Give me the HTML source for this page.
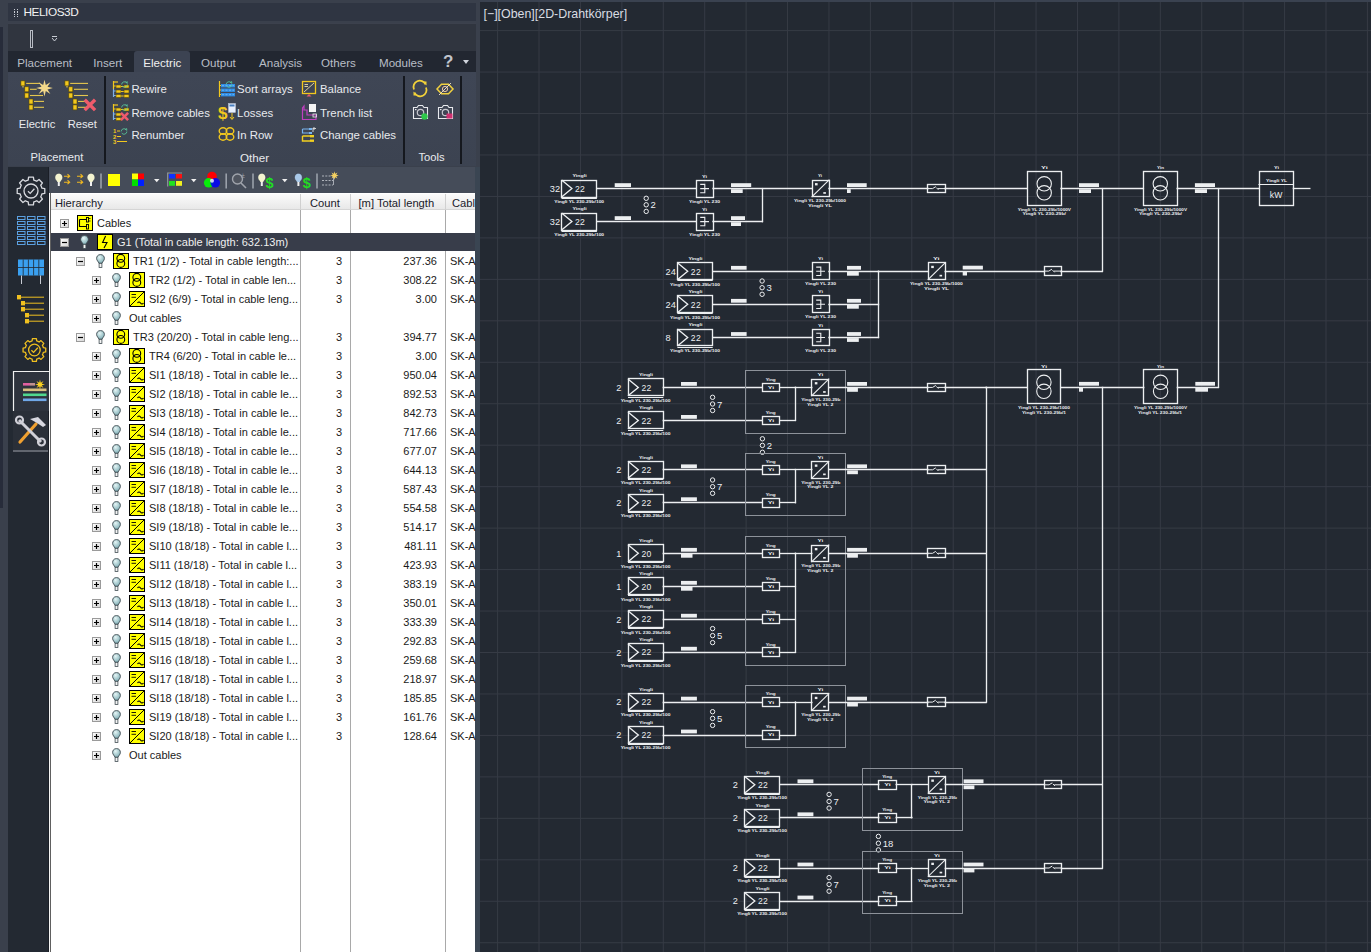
<!DOCTYPE html><html><head><meta charset="utf-8"><style>
*{margin:0;padding:0;box-sizing:border-box}
html,body{width:1371px;height:952px;overflow:hidden;background:#3a404c;font-family:"Liberation Sans",sans-serif}
.a{position:absolute}
.t{position:absolute;white-space:nowrap;line-height:1}
</style></head><body>
<div class="a" style="left:0;top:0;width:480px;height:952px;background:#3a404c"></div><div class="a" style="left:0;top:27px;width:3px;height:481px;background:#272c3a"></div><div class="a" style="left:8px;top:3px;width:468px;height:18px;background:#2f3542"></div><div class="a" style="left:14.0px;top:9.0px;width:1.3px;height:1.3px;background:#c8ccd4"></div><div class="a" style="left:16.6px;top:9.0px;width:1.3px;height:1.3px;background:#c8ccd4"></div><div class="a" style="left:14.0px;top:11.3px;width:1.3px;height:1.3px;background:#c8ccd4"></div><div class="a" style="left:16.6px;top:11.3px;width:1.3px;height:1.3px;background:#c8ccd4"></div><div class="a" style="left:14.0px;top:13.6px;width:1.3px;height:1.3px;background:#c8ccd4"></div><div class="a" style="left:16.6px;top:13.6px;width:1.3px;height:1.3px;background:#c8ccd4"></div><div class="a" style="left:14.0px;top:15.9px;width:1.3px;height:1.3px;background:#c8ccd4"></div><div class="a" style="left:16.6px;top:15.9px;width:1.3px;height:1.3px;background:#c8ccd4"></div><div class="t" style="left:23.5px;top:6.6px;font-size:11.8px;letter-spacing:-0.45px;color:#f2f2f2">HELIOS3D</div><div class="a" style="left:8px;top:23px;width:468px;height:28px;background:#30353f;border-top:1px solid #3c414d"></div><div class="a" style="left:30px;top:30px;width:3px;height:18px;border:1px solid #b8bcc4"></div><div class="a" style="left:52px;top:36px;width:5px;height:1px;background:#c8ccd4"></div><svg class="a" style="left:51px;top:37px" width="7" height="5"><path d="M1 1 L3.5 4 L6 1" stroke="#c8ccd4" fill="none" stroke-width="1"/></svg><div class="a" style="left:8px;top:51px;width:468px;height:21px;background:#222731"></div><div class="a" style="left:134px;top:51px;width:56px;height:22px;background:#3c4352;border-radius:3px 3px 0 0"></div><div class="t" style="left:17.3px;top:56.9px;font-size:11.6px;color:#b9bec6">Placement</div><div class="t" style="left:93.3px;top:56.9px;font-size:11.6px;color:#b9bec6">Insert</div><div class="t" style="left:143.3px;top:56.9px;font-size:11.6px;color:#f0f0f0">Electric</div><div class="t" style="left:201px;top:56.9px;font-size:11.6px;color:#b9bec6">Output</div><div class="t" style="left:259px;top:56.9px;font-size:11.6px;color:#b9bec6">Analysis</div><div class="t" style="left:321px;top:56.9px;font-size:11.6px;color:#b9bec6">Others</div><div class="t" style="left:379px;top:56.9px;font-size:11.6px;color:#b9bec6">Modules</div><div class="t" style="left:443px;top:53px;font-size:17px;font-weight:bold;color:#c0c4cc">?</div><svg class="a" style="left:463px;top:60px" width="7" height="5"><path d="M0 0 H6 L3 4Z" fill="#d0d4dc"/></svg><div class="a" style="left:8px;top:72px;width:468px;height:94px;background:linear-gradient(#3f4655,#3c4351)"></div><div class="a" style="left:104px;top:76px;width:1.5px;height:88px;background:#15181e"></div><div class="a" style="left:403px;top:76px;width:1.5px;height:88px;background:#15181e"></div><div class="a" style="left:460px;top:76px;width:1.5px;height:88px;background:#15181e"></div><div class="t" style="left:18.7px;top:119.3px;font-size:11.2px;color:#e8eaee;">Electric</div><div class="t" style="left:67.7px;top:119.3px;font-size:11.2px;color:#e8eaee;">Reset</div><div class="t" style="left:30.5px;top:151.6px;font-size:11.2px;color:#e8eaee;">Placement</div><div class="t" style="left:240px;top:151.6px;font-size:11.6px;color:#e8eaee;">Other</div><div class="t" style="left:418.5px;top:151.6px;font-size:11.2px;color:#e8eaee;">Tools</div><div class="t" style="left:131.4px;top:84px;font-size:11.4px;color:#e8eaee;">Rewire</div><div class="t" style="left:131.4px;top:107.7px;font-size:11.4px;color:#e8eaee;">Remove cables</div><div class="t" style="left:131.4px;top:130.3px;font-size:11.4px;color:#e8eaee;">Renumber</div><div class="t" style="left:237.1px;top:84px;font-size:11.4px;color:#e8eaee;">Sort arrays</div><div class="t" style="left:237.1px;top:107.7px;font-size:11.4px;color:#e8eaee;">Losses</div><div class="t" style="left:237.1px;top:130.3px;font-size:11.4px;color:#e8eaee;">In Row</div><div class="t" style="left:320px;top:84px;font-size:11.4px;color:#e8eaee;">Balance</div><div class="t" style="left:320px;top:107.7px;font-size:11.4px;color:#e8eaee;">Trench list</div><div class="t" style="left:320px;top:130.3px;font-size:11.4px;color:#e8eaee;">Change cables</div><div class="a" style="left:8px;top:167px;width:41px;height:785px;background:#232932"></div><div class="a" style="left:48px;top:167px;width:1px;height:785px;background:#1a1e26"></div><div class="a" style="left:49px;top:193px;width:1px;height:759px;background:#f4f4f4"></div><div class="a" style="left:50px;top:193px;width:1px;height:759px;background:#606060"></div><div class="a" style="left:49px;top:167px;width:427px;height:26px;background:#454c59"></div><div class="a" style="left:51px;top:193px;width:424px;height:759px;background:#ffffff"></div><div class="a" style="left:475px;top:167px;width:5px;height:785px;background:#3a4552"></div><div class="a" style="left:51px;top:194px;width:424px;height:16px;background:linear-gradient(#fbfbfb,#e8e8e8);border-bottom:1px solid #d5d5d5"></div><div class="a" style="left:300px;top:194px;width:1px;height:16px;background:#d0d0d0"></div><div class="a" style="left:350px;top:194px;width:1px;height:16px;background:#d0d0d0"></div><div class="a" style="left:445px;top:194px;width:1px;height:16px;background:#d0d0d0"></div><div class="t" style="left:55px;top:197.5px;font-size:11.2px;color:#1a1a2a;">Hierarchy</div><div class="t" style="left:310px;top:197.5px;font-size:11.2px;color:#1a1a2a;">Count</div><div class="t" style="left:358.5px;top:197.5px;font-size:11.2px;color:#1a1a2a;">[m] Total length</div><div class="t" style="left:452px;top:197.5px;font-size:11.2px;color:#1a1a2a;">Cabl</div><svg width="0" height="0" style="position:absolute"><defs>

<linearGradient id="gexp" x1="0" y1="0" x2="1" y2="1"><stop offset="0" stop-color="#ffffff"/><stop offset="1" stop-color="#d4d4d4"/></linearGradient>
<radialGradient id="gbulb" cx="0.38" cy="0.3" r="0.75"><stop offset="0" stop-color="#e6f6f6"/><stop offset="1" stop-color="#78aab2"/></radialGradient>





</defs></svg><div class="a" style="left:51px;top:233px;width:424px;height:18px;background:#383d4a"></div><div class="a" style="left:300px;top:210px;width:1px;height:742px;background:#a9a9a9"></div><div class="a" style="left:350px;top:210px;width:1px;height:742px;background:#a9a9a9"></div><div class="a" style="left:445px;top:210px;width:1px;height:742px;background:#a9a9a9"></div><div class="a" style="left:51px;top:233px;width:424px;height:18px;background:#383d4a"></div><svg class="a" style="left:60px;top:219px" width="9" height="9"><rect x="0.5" y="0.5" width="8" height="8" fill="url(#gexp)" stroke="#9a9a9a"/><path d="M2 4.5 H7 M4.5 2 V7" stroke="#000" stroke-width="1.2"/></svg><svg class="a" style="left:77px;top:215px" width="16" height="16"><rect x="0.5" y="0.5" width="15" height="15" fill="#ffff00" stroke="#000"/><path d="M2.5 4.5 H10 M2.5 4.5 V11.5 H10" fill="none" stroke="#000" stroke-width="1.1"/><rect x="9.5" y="2.5" width="2" height="4.5" fill="none" stroke="#000" stroke-width="0.9"/><rect x="9.5" y="9.5" width="2" height="4.5" fill="none" stroke="#000" stroke-width="0.9"/><line x1="11.5" y1="3.5" x2="13.5" y2="3.5" stroke="#000" stroke-width="0.8"/><line x1="11.5" y1="6" x2="13.5" y2="6" stroke="#000" stroke-width="0.8"/></svg><div class="t" style="left:97px;top:217.9px;font-size:11px;color:#1a1a1a">Cables</div><svg class="a" style="left:60px;top:238px" width="9" height="9"><rect x="0.5" y="0.5" width="8" height="8" fill="url(#gexp)" stroke="#9a9a9a"/><path d="M2 4.5 H7" stroke="#000" stroke-width="1.2"/></svg><svg class="a" style="left:80px;top:234.5px" width="9" height="14"><path d="M4.5 0.6 C7.3 0.6 8.4 2.6 8.4 4.5 C8.4 6.5 6.6 7.4 6 9.3 L3 9.3 C2.4 7.4 0.6 6.5 0.6 4.5 C0.6 2.6 1.7 0.6 4.5 0.6Z" fill="url(#gbulb)" stroke="#3e4a50" stroke-width="0.9"/><rect x="3.1" y="9.3" width="2.8" height="4.1" fill="#f4f4f4" stroke="#3e4a50" stroke-width="0.8"/></svg><svg class="a" style="left:97px;top:234px" width="16" height="16"><rect x="0.5" y="0.5" width="15" height="15" fill="#ffff00" stroke="#000"/><path d="M8.6 2 L5.6 8.5 L10 8.5 L7 14" fill="none" stroke="#000" stroke-width="1.1"/></svg><div class="t" style="left:117px;top:236.9px;font-size:11px;color:#f0f0f0">G1 (Total in cable length: 632.13m)</div><svg class="a" style="left:76px;top:257px" width="9" height="9"><rect x="0.5" y="0.5" width="8" height="8" fill="url(#gexp)" stroke="#9a9a9a"/><path d="M2 4.5 H7" stroke="#000" stroke-width="1.2"/></svg><svg class="a" style="left:96px;top:253.5px" width="9" height="14"><path d="M4.5 0.6 C7.3 0.6 8.4 2.6 8.4 4.5 C8.4 6.5 6.6 7.4 6 9.3 L3 9.3 C2.4 7.4 0.6 6.5 0.6 4.5 C0.6 2.6 1.7 0.6 4.5 0.6Z" fill="url(#gbulb)" stroke="#3e4a50" stroke-width="0.9"/><rect x="3.1" y="9.3" width="2.8" height="4.1" fill="#f4f4f4" stroke="#3e4a50" stroke-width="0.8"/></svg><svg class="a" style="left:113px;top:253px" width="16" height="16"><rect x="0.5" y="0.5" width="15" height="15" fill="#ffff00" stroke="#000"/><circle cx="7.8" cy="5.3" r="3.9" fill="none" stroke="#000" stroke-width="1.1"/><circle cx="7.8" cy="10.4" r="3.9" fill="none" stroke="#000" stroke-width="1.1"/><line x1="7.8" y1="0.5" x2="7.8" y2="1.6" stroke="#000" stroke-width="1.4"/><line x1="7.8" y1="14.2" x2="7.8" y2="15.5" stroke="#000" stroke-width="1.4"/></svg><div class="t" style="left:133px;top:255.9px;font-size:11px;color:#1a1a1a">TR1 (1/2) - Total in cable length:...</div><div class="t" style="left:300px;width:42px;text-align:right;top:255.9px;font-size:11px;color:#1a1a1a">3</div><div class="t" style="left:350px;width:87px;text-align:right;top:255.9px;font-size:11px;color:#1a1a1a">237.36</div><div class="t" style="left:450px;top:255.9px;font-size:11px;color:#1a1a1a">SK-A</div><svg class="a" style="left:92px;top:276px" width="9" height="9"><rect x="0.5" y="0.5" width="8" height="8" fill="url(#gexp)" stroke="#9a9a9a"/><path d="M2 4.5 H7 M4.5 2 V7" stroke="#000" stroke-width="1.2"/></svg><svg class="a" style="left:112px;top:272.5px" width="9" height="14"><path d="M4.5 0.6 C7.3 0.6 8.4 2.6 8.4 4.5 C8.4 6.5 6.6 7.4 6 9.3 L3 9.3 C2.4 7.4 0.6 6.5 0.6 4.5 C0.6 2.6 1.7 0.6 4.5 0.6Z" fill="url(#gbulb)" stroke="#3e4a50" stroke-width="0.9"/><rect x="3.1" y="9.3" width="2.8" height="4.1" fill="#f4f4f4" stroke="#3e4a50" stroke-width="0.8"/></svg><svg class="a" style="left:129px;top:272px" width="16" height="16"><rect x="0.5" y="0.5" width="15" height="15" fill="#ffff00" stroke="#000"/><circle cx="7.8" cy="5.3" r="3.9" fill="none" stroke="#000" stroke-width="1.1"/><circle cx="7.8" cy="10.4" r="3.9" fill="none" stroke="#000" stroke-width="1.1"/><line x1="7.8" y1="0.5" x2="7.8" y2="1.6" stroke="#000" stroke-width="1.4"/><line x1="7.8" y1="14.2" x2="7.8" y2="15.5" stroke="#000" stroke-width="1.4"/></svg><div class="t" style="left:149px;top:274.9px;font-size:11px;color:#1a1a1a">TR2 (1/2) - Total in cable len...</div><div class="t" style="left:300px;width:42px;text-align:right;top:274.9px;font-size:11px;color:#1a1a1a">3</div><div class="t" style="left:350px;width:87px;text-align:right;top:274.9px;font-size:11px;color:#1a1a1a">308.22</div><div class="t" style="left:450px;top:274.9px;font-size:11px;color:#1a1a1a">SK-A</div><svg class="a" style="left:92px;top:295px" width="9" height="9"><rect x="0.5" y="0.5" width="8" height="8" fill="url(#gexp)" stroke="#9a9a9a"/><path d="M2 4.5 H7 M4.5 2 V7" stroke="#000" stroke-width="1.2"/></svg><svg class="a" style="left:112px;top:291.5px" width="9" height="14"><path d="M4.5 0.6 C7.3 0.6 8.4 2.6 8.4 4.5 C8.4 6.5 6.6 7.4 6 9.3 L3 9.3 C2.4 7.4 0.6 6.5 0.6 4.5 C0.6 2.6 1.7 0.6 4.5 0.6Z" fill="url(#gbulb)" stroke="#3e4a50" stroke-width="0.9"/><rect x="3.1" y="9.3" width="2.8" height="4.1" fill="#f4f4f4" stroke="#3e4a50" stroke-width="0.8"/></svg><svg class="a" style="left:129px;top:291px" width="16" height="16"><rect x="0.5" y="0.5" width="15" height="15" fill="#ffff00" stroke="#000"/><line x1="1" y1="15" x2="15" y2="1" stroke="#000" stroke-width="1"/><line x1="2.5" y1="3.5" x2="7" y2="3.5" stroke="#000" stroke-width="0.9"/><line x1="2.5" y1="6.3" x2="7" y2="6.3" stroke="#000" stroke-width="0.9"/><path d="M8.5 12 Q10 10 11.5 12 T14.5 12" fill="none" stroke="#000" stroke-width="1.2"/></svg><div class="t" style="left:149px;top:293.9px;font-size:11px;color:#1a1a1a">SI2 (6/9) - Total in cable leng...</div><div class="t" style="left:300px;width:42px;text-align:right;top:293.9px;font-size:11px;color:#1a1a1a">3</div><div class="t" style="left:350px;width:87px;text-align:right;top:293.9px;font-size:11px;color:#1a1a1a">3.00</div><div class="t" style="left:450px;top:293.9px;font-size:11px;color:#1a1a1a">SK-A</div><svg class="a" style="left:92px;top:314px" width="9" height="9"><rect x="0.5" y="0.5" width="8" height="8" fill="url(#gexp)" stroke="#9a9a9a"/><path d="M2 4.5 H7 M4.5 2 V7" stroke="#000" stroke-width="1.2"/></svg><svg class="a" style="left:112px;top:310.5px" width="9" height="14"><path d="M4.5 0.6 C7.3 0.6 8.4 2.6 8.4 4.5 C8.4 6.5 6.6 7.4 6 9.3 L3 9.3 C2.4 7.4 0.6 6.5 0.6 4.5 C0.6 2.6 1.7 0.6 4.5 0.6Z" fill="url(#gbulb)" stroke="#3e4a50" stroke-width="0.9"/><rect x="3.1" y="9.3" width="2.8" height="4.1" fill="#f4f4f4" stroke="#3e4a50" stroke-width="0.8"/></svg><div class="t" style="left:129px;top:312.9px;font-size:11px;color:#1a1a1a">Out cables</div><svg class="a" style="left:76px;top:333px" width="9" height="9"><rect x="0.5" y="0.5" width="8" height="8" fill="url(#gexp)" stroke="#9a9a9a"/><path d="M2 4.5 H7" stroke="#000" stroke-width="1.2"/></svg><svg class="a" style="left:96px;top:329.5px" width="9" height="14"><path d="M4.5 0.6 C7.3 0.6 8.4 2.6 8.4 4.5 C8.4 6.5 6.6 7.4 6 9.3 L3 9.3 C2.4 7.4 0.6 6.5 0.6 4.5 C0.6 2.6 1.7 0.6 4.5 0.6Z" fill="url(#gbulb)" stroke="#3e4a50" stroke-width="0.9"/><rect x="3.1" y="9.3" width="2.8" height="4.1" fill="#f4f4f4" stroke="#3e4a50" stroke-width="0.8"/></svg><svg class="a" style="left:113px;top:329px" width="16" height="16"><rect x="0.5" y="0.5" width="15" height="15" fill="#ffff00" stroke="#000"/><circle cx="7.8" cy="5.3" r="3.9" fill="none" stroke="#000" stroke-width="1.1"/><circle cx="7.8" cy="10.4" r="3.9" fill="none" stroke="#000" stroke-width="1.1"/><line x1="7.8" y1="0.5" x2="7.8" y2="1.6" stroke="#000" stroke-width="1.4"/><line x1="7.8" y1="14.2" x2="7.8" y2="15.5" stroke="#000" stroke-width="1.4"/></svg><div class="t" style="left:133px;top:331.9px;font-size:11px;color:#1a1a1a">TR3 (20/20) - Total in cable leng...</div><div class="t" style="left:300px;width:42px;text-align:right;top:331.9px;font-size:11px;color:#1a1a1a">3</div><div class="t" style="left:350px;width:87px;text-align:right;top:331.9px;font-size:11px;color:#1a1a1a">394.77</div><div class="t" style="left:450px;top:331.9px;font-size:11px;color:#1a1a1a">SK-A</div><svg class="a" style="left:92px;top:352px" width="9" height="9"><rect x="0.5" y="0.5" width="8" height="8" fill="url(#gexp)" stroke="#9a9a9a"/><path d="M2 4.5 H7 M4.5 2 V7" stroke="#000" stroke-width="1.2"/></svg><svg class="a" style="left:112px;top:348.5px" width="9" height="14"><path d="M4.5 0.6 C7.3 0.6 8.4 2.6 8.4 4.5 C8.4 6.5 6.6 7.4 6 9.3 L3 9.3 C2.4 7.4 0.6 6.5 0.6 4.5 C0.6 2.6 1.7 0.6 4.5 0.6Z" fill="url(#gbulb)" stroke="#3e4a50" stroke-width="0.9"/><rect x="3.1" y="9.3" width="2.8" height="4.1" fill="#f4f4f4" stroke="#3e4a50" stroke-width="0.8"/></svg><svg class="a" style="left:129px;top:348px" width="16" height="16"><rect x="0.5" y="0.5" width="15" height="15" fill="#ffff00" stroke="#000"/><circle cx="7.8" cy="5.3" r="3.9" fill="none" stroke="#000" stroke-width="1.1"/><circle cx="7.8" cy="10.4" r="3.9" fill="none" stroke="#000" stroke-width="1.1"/><line x1="7.8" y1="0.5" x2="7.8" y2="1.6" stroke="#000" stroke-width="1.4"/><line x1="7.8" y1="14.2" x2="7.8" y2="15.5" stroke="#000" stroke-width="1.4"/></svg><div class="t" style="left:149px;top:350.9px;font-size:11px;color:#1a1a1a">TR4 (6/20) - Total in cable le...</div><div class="t" style="left:300px;width:42px;text-align:right;top:350.9px;font-size:11px;color:#1a1a1a">3</div><div class="t" style="left:350px;width:87px;text-align:right;top:350.9px;font-size:11px;color:#1a1a1a">3.00</div><div class="t" style="left:450px;top:350.9px;font-size:11px;color:#1a1a1a">SK-A</div><svg class="a" style="left:92px;top:371px" width="9" height="9"><rect x="0.5" y="0.5" width="8" height="8" fill="url(#gexp)" stroke="#9a9a9a"/><path d="M2 4.5 H7 M4.5 2 V7" stroke="#000" stroke-width="1.2"/></svg><svg class="a" style="left:112px;top:367.5px" width="9" height="14"><path d="M4.5 0.6 C7.3 0.6 8.4 2.6 8.4 4.5 C8.4 6.5 6.6 7.4 6 9.3 L3 9.3 C2.4 7.4 0.6 6.5 0.6 4.5 C0.6 2.6 1.7 0.6 4.5 0.6Z" fill="url(#gbulb)" stroke="#3e4a50" stroke-width="0.9"/><rect x="3.1" y="9.3" width="2.8" height="4.1" fill="#f4f4f4" stroke="#3e4a50" stroke-width="0.8"/></svg><svg class="a" style="left:129px;top:367px" width="16" height="16"><rect x="0.5" y="0.5" width="15" height="15" fill="#ffff00" stroke="#000"/><line x1="1" y1="15" x2="15" y2="1" stroke="#000" stroke-width="1"/><line x1="2.5" y1="3.5" x2="7" y2="3.5" stroke="#000" stroke-width="0.9"/><line x1="2.5" y1="6.3" x2="7" y2="6.3" stroke="#000" stroke-width="0.9"/><path d="M8.5 12 Q10 10 11.5 12 T14.5 12" fill="none" stroke="#000" stroke-width="1.2"/></svg><div class="t" style="left:149px;top:369.9px;font-size:11px;color:#1a1a1a">SI1 (18/18) - Total in cable le...</div><div class="t" style="left:300px;width:42px;text-align:right;top:369.9px;font-size:11px;color:#1a1a1a">3</div><div class="t" style="left:350px;width:87px;text-align:right;top:369.9px;font-size:11px;color:#1a1a1a">950.04</div><div class="t" style="left:450px;top:369.9px;font-size:11px;color:#1a1a1a">SK-A</div><svg class="a" style="left:92px;top:390px" width="9" height="9"><rect x="0.5" y="0.5" width="8" height="8" fill="url(#gexp)" stroke="#9a9a9a"/><path d="M2 4.5 H7 M4.5 2 V7" stroke="#000" stroke-width="1.2"/></svg><svg class="a" style="left:112px;top:386.5px" width="9" height="14"><path d="M4.5 0.6 C7.3 0.6 8.4 2.6 8.4 4.5 C8.4 6.5 6.6 7.4 6 9.3 L3 9.3 C2.4 7.4 0.6 6.5 0.6 4.5 C0.6 2.6 1.7 0.6 4.5 0.6Z" fill="url(#gbulb)" stroke="#3e4a50" stroke-width="0.9"/><rect x="3.1" y="9.3" width="2.8" height="4.1" fill="#f4f4f4" stroke="#3e4a50" stroke-width="0.8"/></svg><svg class="a" style="left:129px;top:386px" width="16" height="16"><rect x="0.5" y="0.5" width="15" height="15" fill="#ffff00" stroke="#000"/><line x1="1" y1="15" x2="15" y2="1" stroke="#000" stroke-width="1"/><line x1="2.5" y1="3.5" x2="7" y2="3.5" stroke="#000" stroke-width="0.9"/><line x1="2.5" y1="6.3" x2="7" y2="6.3" stroke="#000" stroke-width="0.9"/><path d="M8.5 12 Q10 10 11.5 12 T14.5 12" fill="none" stroke="#000" stroke-width="1.2"/></svg><div class="t" style="left:149px;top:388.9px;font-size:11px;color:#1a1a1a">SI2 (18/18) - Total in cable le...</div><div class="t" style="left:300px;width:42px;text-align:right;top:388.9px;font-size:11px;color:#1a1a1a">3</div><div class="t" style="left:350px;width:87px;text-align:right;top:388.9px;font-size:11px;color:#1a1a1a">892.53</div><div class="t" style="left:450px;top:388.9px;font-size:11px;color:#1a1a1a">SK-A</div><svg class="a" style="left:92px;top:409px" width="9" height="9"><rect x="0.5" y="0.5" width="8" height="8" fill="url(#gexp)" stroke="#9a9a9a"/><path d="M2 4.5 H7 M4.5 2 V7" stroke="#000" stroke-width="1.2"/></svg><svg class="a" style="left:112px;top:405.5px" width="9" height="14"><path d="M4.5 0.6 C7.3 0.6 8.4 2.6 8.4 4.5 C8.4 6.5 6.6 7.4 6 9.3 L3 9.3 C2.4 7.4 0.6 6.5 0.6 4.5 C0.6 2.6 1.7 0.6 4.5 0.6Z" fill="url(#gbulb)" stroke="#3e4a50" stroke-width="0.9"/><rect x="3.1" y="9.3" width="2.8" height="4.1" fill="#f4f4f4" stroke="#3e4a50" stroke-width="0.8"/></svg><svg class="a" style="left:129px;top:405px" width="16" height="16"><rect x="0.5" y="0.5" width="15" height="15" fill="#ffff00" stroke="#000"/><line x1="1" y1="15" x2="15" y2="1" stroke="#000" stroke-width="1"/><line x1="2.5" y1="3.5" x2="7" y2="3.5" stroke="#000" stroke-width="0.9"/><line x1="2.5" y1="6.3" x2="7" y2="6.3" stroke="#000" stroke-width="0.9"/><path d="M8.5 12 Q10 10 11.5 12 T14.5 12" fill="none" stroke="#000" stroke-width="1.2"/></svg><div class="t" style="left:149px;top:407.9px;font-size:11px;color:#1a1a1a">SI3 (18/18) - Total in cable le...</div><div class="t" style="left:300px;width:42px;text-align:right;top:407.9px;font-size:11px;color:#1a1a1a">3</div><div class="t" style="left:350px;width:87px;text-align:right;top:407.9px;font-size:11px;color:#1a1a1a">842.73</div><div class="t" style="left:450px;top:407.9px;font-size:11px;color:#1a1a1a">SK-A</div><svg class="a" style="left:92px;top:428px" width="9" height="9"><rect x="0.5" y="0.5" width="8" height="8" fill="url(#gexp)" stroke="#9a9a9a"/><path d="M2 4.5 H7 M4.5 2 V7" stroke="#000" stroke-width="1.2"/></svg><svg class="a" style="left:112px;top:424.5px" width="9" height="14"><path d="M4.5 0.6 C7.3 0.6 8.4 2.6 8.4 4.5 C8.4 6.5 6.6 7.4 6 9.3 L3 9.3 C2.4 7.4 0.6 6.5 0.6 4.5 C0.6 2.6 1.7 0.6 4.5 0.6Z" fill="url(#gbulb)" stroke="#3e4a50" stroke-width="0.9"/><rect x="3.1" y="9.3" width="2.8" height="4.1" fill="#f4f4f4" stroke="#3e4a50" stroke-width="0.8"/></svg><svg class="a" style="left:129px;top:424px" width="16" height="16"><rect x="0.5" y="0.5" width="15" height="15" fill="#ffff00" stroke="#000"/><line x1="1" y1="15" x2="15" y2="1" stroke="#000" stroke-width="1"/><line x1="2.5" y1="3.5" x2="7" y2="3.5" stroke="#000" stroke-width="0.9"/><line x1="2.5" y1="6.3" x2="7" y2="6.3" stroke="#000" stroke-width="0.9"/><path d="M8.5 12 Q10 10 11.5 12 T14.5 12" fill="none" stroke="#000" stroke-width="1.2"/></svg><div class="t" style="left:149px;top:426.9px;font-size:11px;color:#1a1a1a">SI4 (18/18) - Total in cable le...</div><div class="t" style="left:300px;width:42px;text-align:right;top:426.9px;font-size:11px;color:#1a1a1a">3</div><div class="t" style="left:350px;width:87px;text-align:right;top:426.9px;font-size:11px;color:#1a1a1a">717.66</div><div class="t" style="left:450px;top:426.9px;font-size:11px;color:#1a1a1a">SK-A</div><svg class="a" style="left:92px;top:447px" width="9" height="9"><rect x="0.5" y="0.5" width="8" height="8" fill="url(#gexp)" stroke="#9a9a9a"/><path d="M2 4.5 H7 M4.5 2 V7" stroke="#000" stroke-width="1.2"/></svg><svg class="a" style="left:112px;top:443.5px" width="9" height="14"><path d="M4.5 0.6 C7.3 0.6 8.4 2.6 8.4 4.5 C8.4 6.5 6.6 7.4 6 9.3 L3 9.3 C2.4 7.4 0.6 6.5 0.6 4.5 C0.6 2.6 1.7 0.6 4.5 0.6Z" fill="url(#gbulb)" stroke="#3e4a50" stroke-width="0.9"/><rect x="3.1" y="9.3" width="2.8" height="4.1" fill="#f4f4f4" stroke="#3e4a50" stroke-width="0.8"/></svg><svg class="a" style="left:129px;top:443px" width="16" height="16"><rect x="0.5" y="0.5" width="15" height="15" fill="#ffff00" stroke="#000"/><line x1="1" y1="15" x2="15" y2="1" stroke="#000" stroke-width="1"/><line x1="2.5" y1="3.5" x2="7" y2="3.5" stroke="#000" stroke-width="0.9"/><line x1="2.5" y1="6.3" x2="7" y2="6.3" stroke="#000" stroke-width="0.9"/><path d="M8.5 12 Q10 10 11.5 12 T14.5 12" fill="none" stroke="#000" stroke-width="1.2"/></svg><div class="t" style="left:149px;top:445.9px;font-size:11px;color:#1a1a1a">SI5 (18/18) - Total in cable le...</div><div class="t" style="left:300px;width:42px;text-align:right;top:445.9px;font-size:11px;color:#1a1a1a">3</div><div class="t" style="left:350px;width:87px;text-align:right;top:445.9px;font-size:11px;color:#1a1a1a">677.07</div><div class="t" style="left:450px;top:445.9px;font-size:11px;color:#1a1a1a">SK-A</div><svg class="a" style="left:92px;top:466px" width="9" height="9"><rect x="0.5" y="0.5" width="8" height="8" fill="url(#gexp)" stroke="#9a9a9a"/><path d="M2 4.5 H7 M4.5 2 V7" stroke="#000" stroke-width="1.2"/></svg><svg class="a" style="left:112px;top:462.5px" width="9" height="14"><path d="M4.5 0.6 C7.3 0.6 8.4 2.6 8.4 4.5 C8.4 6.5 6.6 7.4 6 9.3 L3 9.3 C2.4 7.4 0.6 6.5 0.6 4.5 C0.6 2.6 1.7 0.6 4.5 0.6Z" fill="url(#gbulb)" stroke="#3e4a50" stroke-width="0.9"/><rect x="3.1" y="9.3" width="2.8" height="4.1" fill="#f4f4f4" stroke="#3e4a50" stroke-width="0.8"/></svg><svg class="a" style="left:129px;top:462px" width="16" height="16"><rect x="0.5" y="0.5" width="15" height="15" fill="#ffff00" stroke="#000"/><line x1="1" y1="15" x2="15" y2="1" stroke="#000" stroke-width="1"/><line x1="2.5" y1="3.5" x2="7" y2="3.5" stroke="#000" stroke-width="0.9"/><line x1="2.5" y1="6.3" x2="7" y2="6.3" stroke="#000" stroke-width="0.9"/><path d="M8.5 12 Q10 10 11.5 12 T14.5 12" fill="none" stroke="#000" stroke-width="1.2"/></svg><div class="t" style="left:149px;top:464.9px;font-size:11px;color:#1a1a1a">SI6 (18/18) - Total in cable le...</div><div class="t" style="left:300px;width:42px;text-align:right;top:464.9px;font-size:11px;color:#1a1a1a">3</div><div class="t" style="left:350px;width:87px;text-align:right;top:464.9px;font-size:11px;color:#1a1a1a">644.13</div><div class="t" style="left:450px;top:464.9px;font-size:11px;color:#1a1a1a">SK-A</div><svg class="a" style="left:92px;top:485px" width="9" height="9"><rect x="0.5" y="0.5" width="8" height="8" fill="url(#gexp)" stroke="#9a9a9a"/><path d="M2 4.5 H7 M4.5 2 V7" stroke="#000" stroke-width="1.2"/></svg><svg class="a" style="left:112px;top:481.5px" width="9" height="14"><path d="M4.5 0.6 C7.3 0.6 8.4 2.6 8.4 4.5 C8.4 6.5 6.6 7.4 6 9.3 L3 9.3 C2.4 7.4 0.6 6.5 0.6 4.5 C0.6 2.6 1.7 0.6 4.5 0.6Z" fill="url(#gbulb)" stroke="#3e4a50" stroke-width="0.9"/><rect x="3.1" y="9.3" width="2.8" height="4.1" fill="#f4f4f4" stroke="#3e4a50" stroke-width="0.8"/></svg><svg class="a" style="left:129px;top:481px" width="16" height="16"><rect x="0.5" y="0.5" width="15" height="15" fill="#ffff00" stroke="#000"/><line x1="1" y1="15" x2="15" y2="1" stroke="#000" stroke-width="1"/><line x1="2.5" y1="3.5" x2="7" y2="3.5" stroke="#000" stroke-width="0.9"/><line x1="2.5" y1="6.3" x2="7" y2="6.3" stroke="#000" stroke-width="0.9"/><path d="M8.5 12 Q10 10 11.5 12 T14.5 12" fill="none" stroke="#000" stroke-width="1.2"/></svg><div class="t" style="left:149px;top:483.9px;font-size:11px;color:#1a1a1a">SI7 (18/18) - Total in cable le...</div><div class="t" style="left:300px;width:42px;text-align:right;top:483.9px;font-size:11px;color:#1a1a1a">3</div><div class="t" style="left:350px;width:87px;text-align:right;top:483.9px;font-size:11px;color:#1a1a1a">587.43</div><div class="t" style="left:450px;top:483.9px;font-size:11px;color:#1a1a1a">SK-A</div><svg class="a" style="left:92px;top:504px" width="9" height="9"><rect x="0.5" y="0.5" width="8" height="8" fill="url(#gexp)" stroke="#9a9a9a"/><path d="M2 4.5 H7 M4.5 2 V7" stroke="#000" stroke-width="1.2"/></svg><svg class="a" style="left:112px;top:500.5px" width="9" height="14"><path d="M4.5 0.6 C7.3 0.6 8.4 2.6 8.4 4.5 C8.4 6.5 6.6 7.4 6 9.3 L3 9.3 C2.4 7.4 0.6 6.5 0.6 4.5 C0.6 2.6 1.7 0.6 4.5 0.6Z" fill="url(#gbulb)" stroke="#3e4a50" stroke-width="0.9"/><rect x="3.1" y="9.3" width="2.8" height="4.1" fill="#f4f4f4" stroke="#3e4a50" stroke-width="0.8"/></svg><svg class="a" style="left:129px;top:500px" width="16" height="16"><rect x="0.5" y="0.5" width="15" height="15" fill="#ffff00" stroke="#000"/><line x1="1" y1="15" x2="15" y2="1" stroke="#000" stroke-width="1"/><line x1="2.5" y1="3.5" x2="7" y2="3.5" stroke="#000" stroke-width="0.9"/><line x1="2.5" y1="6.3" x2="7" y2="6.3" stroke="#000" stroke-width="0.9"/><path d="M8.5 12 Q10 10 11.5 12 T14.5 12" fill="none" stroke="#000" stroke-width="1.2"/></svg><div class="t" style="left:149px;top:502.9px;font-size:11px;color:#1a1a1a">SI8 (18/18) - Total in cable le...</div><div class="t" style="left:300px;width:42px;text-align:right;top:502.9px;font-size:11px;color:#1a1a1a">3</div><div class="t" style="left:350px;width:87px;text-align:right;top:502.9px;font-size:11px;color:#1a1a1a">554.58</div><div class="t" style="left:450px;top:502.9px;font-size:11px;color:#1a1a1a">SK-A</div><svg class="a" style="left:92px;top:523px" width="9" height="9"><rect x="0.5" y="0.5" width="8" height="8" fill="url(#gexp)" stroke="#9a9a9a"/><path d="M2 4.5 H7 M4.5 2 V7" stroke="#000" stroke-width="1.2"/></svg><svg class="a" style="left:112px;top:519.5px" width="9" height="14"><path d="M4.5 0.6 C7.3 0.6 8.4 2.6 8.4 4.5 C8.4 6.5 6.6 7.4 6 9.3 L3 9.3 C2.4 7.4 0.6 6.5 0.6 4.5 C0.6 2.6 1.7 0.6 4.5 0.6Z" fill="url(#gbulb)" stroke="#3e4a50" stroke-width="0.9"/><rect x="3.1" y="9.3" width="2.8" height="4.1" fill="#f4f4f4" stroke="#3e4a50" stroke-width="0.8"/></svg><svg class="a" style="left:129px;top:519px" width="16" height="16"><rect x="0.5" y="0.5" width="15" height="15" fill="#ffff00" stroke="#000"/><line x1="1" y1="15" x2="15" y2="1" stroke="#000" stroke-width="1"/><line x1="2.5" y1="3.5" x2="7" y2="3.5" stroke="#000" stroke-width="0.9"/><line x1="2.5" y1="6.3" x2="7" y2="6.3" stroke="#000" stroke-width="0.9"/><path d="M8.5 12 Q10 10 11.5 12 T14.5 12" fill="none" stroke="#000" stroke-width="1.2"/></svg><div class="t" style="left:149px;top:521.9px;font-size:11px;color:#1a1a1a">SI9 (18/18) - Total in cable le...</div><div class="t" style="left:300px;width:42px;text-align:right;top:521.9px;font-size:11px;color:#1a1a1a">3</div><div class="t" style="left:350px;width:87px;text-align:right;top:521.9px;font-size:11px;color:#1a1a1a">514.17</div><div class="t" style="left:450px;top:521.9px;font-size:11px;color:#1a1a1a">SK-A</div><svg class="a" style="left:92px;top:542px" width="9" height="9"><rect x="0.5" y="0.5" width="8" height="8" fill="url(#gexp)" stroke="#9a9a9a"/><path d="M2 4.5 H7 M4.5 2 V7" stroke="#000" stroke-width="1.2"/></svg><svg class="a" style="left:112px;top:538.5px" width="9" height="14"><path d="M4.5 0.6 C7.3 0.6 8.4 2.6 8.4 4.5 C8.4 6.5 6.6 7.4 6 9.3 L3 9.3 C2.4 7.4 0.6 6.5 0.6 4.5 C0.6 2.6 1.7 0.6 4.5 0.6Z" fill="url(#gbulb)" stroke="#3e4a50" stroke-width="0.9"/><rect x="3.1" y="9.3" width="2.8" height="4.1" fill="#f4f4f4" stroke="#3e4a50" stroke-width="0.8"/></svg><svg class="a" style="left:129px;top:538px" width="16" height="16"><rect x="0.5" y="0.5" width="15" height="15" fill="#ffff00" stroke="#000"/><line x1="1" y1="15" x2="15" y2="1" stroke="#000" stroke-width="1"/><line x1="2.5" y1="3.5" x2="7" y2="3.5" stroke="#000" stroke-width="0.9"/><line x1="2.5" y1="6.3" x2="7" y2="6.3" stroke="#000" stroke-width="0.9"/><path d="M8.5 12 Q10 10 11.5 12 T14.5 12" fill="none" stroke="#000" stroke-width="1.2"/></svg><div class="t" style="left:149px;top:540.9px;font-size:11px;color:#1a1a1a">SI10 (18/18) - Total in cable l...</div><div class="t" style="left:300px;width:42px;text-align:right;top:540.9px;font-size:11px;color:#1a1a1a">3</div><div class="t" style="left:350px;width:87px;text-align:right;top:540.9px;font-size:11px;color:#1a1a1a">481.11</div><div class="t" style="left:450px;top:540.9px;font-size:11px;color:#1a1a1a">SK-A</div><svg class="a" style="left:92px;top:561px" width="9" height="9"><rect x="0.5" y="0.5" width="8" height="8" fill="url(#gexp)" stroke="#9a9a9a"/><path d="M2 4.5 H7 M4.5 2 V7" stroke="#000" stroke-width="1.2"/></svg><svg class="a" style="left:112px;top:557.5px" width="9" height="14"><path d="M4.5 0.6 C7.3 0.6 8.4 2.6 8.4 4.5 C8.4 6.5 6.6 7.4 6 9.3 L3 9.3 C2.4 7.4 0.6 6.5 0.6 4.5 C0.6 2.6 1.7 0.6 4.5 0.6Z" fill="url(#gbulb)" stroke="#3e4a50" stroke-width="0.9"/><rect x="3.1" y="9.3" width="2.8" height="4.1" fill="#f4f4f4" stroke="#3e4a50" stroke-width="0.8"/></svg><svg class="a" style="left:129px;top:557px" width="16" height="16"><rect x="0.5" y="0.5" width="15" height="15" fill="#ffff00" stroke="#000"/><line x1="1" y1="15" x2="15" y2="1" stroke="#000" stroke-width="1"/><line x1="2.5" y1="3.5" x2="7" y2="3.5" stroke="#000" stroke-width="0.9"/><line x1="2.5" y1="6.3" x2="7" y2="6.3" stroke="#000" stroke-width="0.9"/><path d="M8.5 12 Q10 10 11.5 12 T14.5 12" fill="none" stroke="#000" stroke-width="1.2"/></svg><div class="t" style="left:149px;top:559.9px;font-size:11px;color:#1a1a1a">SI11 (18/18) - Total in cable l...</div><div class="t" style="left:300px;width:42px;text-align:right;top:559.9px;font-size:11px;color:#1a1a1a">3</div><div class="t" style="left:350px;width:87px;text-align:right;top:559.9px;font-size:11px;color:#1a1a1a">423.93</div><div class="t" style="left:450px;top:559.9px;font-size:11px;color:#1a1a1a">SK-A</div><svg class="a" style="left:92px;top:580px" width="9" height="9"><rect x="0.5" y="0.5" width="8" height="8" fill="url(#gexp)" stroke="#9a9a9a"/><path d="M2 4.5 H7 M4.5 2 V7" stroke="#000" stroke-width="1.2"/></svg><svg class="a" style="left:112px;top:576.5px" width="9" height="14"><path d="M4.5 0.6 C7.3 0.6 8.4 2.6 8.4 4.5 C8.4 6.5 6.6 7.4 6 9.3 L3 9.3 C2.4 7.4 0.6 6.5 0.6 4.5 C0.6 2.6 1.7 0.6 4.5 0.6Z" fill="url(#gbulb)" stroke="#3e4a50" stroke-width="0.9"/><rect x="3.1" y="9.3" width="2.8" height="4.1" fill="#f4f4f4" stroke="#3e4a50" stroke-width="0.8"/></svg><svg class="a" style="left:129px;top:576px" width="16" height="16"><rect x="0.5" y="0.5" width="15" height="15" fill="#ffff00" stroke="#000"/><line x1="1" y1="15" x2="15" y2="1" stroke="#000" stroke-width="1"/><line x1="2.5" y1="3.5" x2="7" y2="3.5" stroke="#000" stroke-width="0.9"/><line x1="2.5" y1="6.3" x2="7" y2="6.3" stroke="#000" stroke-width="0.9"/><path d="M8.5 12 Q10 10 11.5 12 T14.5 12" fill="none" stroke="#000" stroke-width="1.2"/></svg><div class="t" style="left:149px;top:578.9px;font-size:11px;color:#1a1a1a">SI12 (18/18) - Total in cable l...</div><div class="t" style="left:300px;width:42px;text-align:right;top:578.9px;font-size:11px;color:#1a1a1a">3</div><div class="t" style="left:350px;width:87px;text-align:right;top:578.9px;font-size:11px;color:#1a1a1a">383.19</div><div class="t" style="left:450px;top:578.9px;font-size:11px;color:#1a1a1a">SK-A</div><svg class="a" style="left:92px;top:599px" width="9" height="9"><rect x="0.5" y="0.5" width="8" height="8" fill="url(#gexp)" stroke="#9a9a9a"/><path d="M2 4.5 H7 M4.5 2 V7" stroke="#000" stroke-width="1.2"/></svg><svg class="a" style="left:112px;top:595.5px" width="9" height="14"><path d="M4.5 0.6 C7.3 0.6 8.4 2.6 8.4 4.5 C8.4 6.5 6.6 7.4 6 9.3 L3 9.3 C2.4 7.4 0.6 6.5 0.6 4.5 C0.6 2.6 1.7 0.6 4.5 0.6Z" fill="url(#gbulb)" stroke="#3e4a50" stroke-width="0.9"/><rect x="3.1" y="9.3" width="2.8" height="4.1" fill="#f4f4f4" stroke="#3e4a50" stroke-width="0.8"/></svg><svg class="a" style="left:129px;top:595px" width="16" height="16"><rect x="0.5" y="0.5" width="15" height="15" fill="#ffff00" stroke="#000"/><line x1="1" y1="15" x2="15" y2="1" stroke="#000" stroke-width="1"/><line x1="2.5" y1="3.5" x2="7" y2="3.5" stroke="#000" stroke-width="0.9"/><line x1="2.5" y1="6.3" x2="7" y2="6.3" stroke="#000" stroke-width="0.9"/><path d="M8.5 12 Q10 10 11.5 12 T14.5 12" fill="none" stroke="#000" stroke-width="1.2"/></svg><div class="t" style="left:149px;top:597.9px;font-size:11px;color:#1a1a1a">SI13 (18/18) - Total in cable l...</div><div class="t" style="left:300px;width:42px;text-align:right;top:597.9px;font-size:11px;color:#1a1a1a">3</div><div class="t" style="left:350px;width:87px;text-align:right;top:597.9px;font-size:11px;color:#1a1a1a">350.01</div><div class="t" style="left:450px;top:597.9px;font-size:11px;color:#1a1a1a">SK-A</div><svg class="a" style="left:92px;top:618px" width="9" height="9"><rect x="0.5" y="0.5" width="8" height="8" fill="url(#gexp)" stroke="#9a9a9a"/><path d="M2 4.5 H7 M4.5 2 V7" stroke="#000" stroke-width="1.2"/></svg><svg class="a" style="left:112px;top:614.5px" width="9" height="14"><path d="M4.5 0.6 C7.3 0.6 8.4 2.6 8.4 4.5 C8.4 6.5 6.6 7.4 6 9.3 L3 9.3 C2.4 7.4 0.6 6.5 0.6 4.5 C0.6 2.6 1.7 0.6 4.5 0.6Z" fill="url(#gbulb)" stroke="#3e4a50" stroke-width="0.9"/><rect x="3.1" y="9.3" width="2.8" height="4.1" fill="#f4f4f4" stroke="#3e4a50" stroke-width="0.8"/></svg><svg class="a" style="left:129px;top:614px" width="16" height="16"><rect x="0.5" y="0.5" width="15" height="15" fill="#ffff00" stroke="#000"/><line x1="1" y1="15" x2="15" y2="1" stroke="#000" stroke-width="1"/><line x1="2.5" y1="3.5" x2="7" y2="3.5" stroke="#000" stroke-width="0.9"/><line x1="2.5" y1="6.3" x2="7" y2="6.3" stroke="#000" stroke-width="0.9"/><path d="M8.5 12 Q10 10 11.5 12 T14.5 12" fill="none" stroke="#000" stroke-width="1.2"/></svg><div class="t" style="left:149px;top:616.9px;font-size:11px;color:#1a1a1a">SI14 (18/18) - Total in cable l...</div><div class="t" style="left:300px;width:42px;text-align:right;top:616.9px;font-size:11px;color:#1a1a1a">3</div><div class="t" style="left:350px;width:87px;text-align:right;top:616.9px;font-size:11px;color:#1a1a1a">333.39</div><div class="t" style="left:450px;top:616.9px;font-size:11px;color:#1a1a1a">SK-A</div><svg class="a" style="left:92px;top:637px" width="9" height="9"><rect x="0.5" y="0.5" width="8" height="8" fill="url(#gexp)" stroke="#9a9a9a"/><path d="M2 4.5 H7 M4.5 2 V7" stroke="#000" stroke-width="1.2"/></svg><svg class="a" style="left:112px;top:633.5px" width="9" height="14"><path d="M4.5 0.6 C7.3 0.6 8.4 2.6 8.4 4.5 C8.4 6.5 6.6 7.4 6 9.3 L3 9.3 C2.4 7.4 0.6 6.5 0.6 4.5 C0.6 2.6 1.7 0.6 4.5 0.6Z" fill="url(#gbulb)" stroke="#3e4a50" stroke-width="0.9"/><rect x="3.1" y="9.3" width="2.8" height="4.1" fill="#f4f4f4" stroke="#3e4a50" stroke-width="0.8"/></svg><svg class="a" style="left:129px;top:633px" width="16" height="16"><rect x="0.5" y="0.5" width="15" height="15" fill="#ffff00" stroke="#000"/><line x1="1" y1="15" x2="15" y2="1" stroke="#000" stroke-width="1"/><line x1="2.5" y1="3.5" x2="7" y2="3.5" stroke="#000" stroke-width="0.9"/><line x1="2.5" y1="6.3" x2="7" y2="6.3" stroke="#000" stroke-width="0.9"/><path d="M8.5 12 Q10 10 11.5 12 T14.5 12" fill="none" stroke="#000" stroke-width="1.2"/></svg><div class="t" style="left:149px;top:635.9px;font-size:11px;color:#1a1a1a">SI15 (18/18) - Total in cable l...</div><div class="t" style="left:300px;width:42px;text-align:right;top:635.9px;font-size:11px;color:#1a1a1a">3</div><div class="t" style="left:350px;width:87px;text-align:right;top:635.9px;font-size:11px;color:#1a1a1a">292.83</div><div class="t" style="left:450px;top:635.9px;font-size:11px;color:#1a1a1a">SK-A</div><svg class="a" style="left:92px;top:656px" width="9" height="9"><rect x="0.5" y="0.5" width="8" height="8" fill="url(#gexp)" stroke="#9a9a9a"/><path d="M2 4.5 H7 M4.5 2 V7" stroke="#000" stroke-width="1.2"/></svg><svg class="a" style="left:112px;top:652.5px" width="9" height="14"><path d="M4.5 0.6 C7.3 0.6 8.4 2.6 8.4 4.5 C8.4 6.5 6.6 7.4 6 9.3 L3 9.3 C2.4 7.4 0.6 6.5 0.6 4.5 C0.6 2.6 1.7 0.6 4.5 0.6Z" fill="url(#gbulb)" stroke="#3e4a50" stroke-width="0.9"/><rect x="3.1" y="9.3" width="2.8" height="4.1" fill="#f4f4f4" stroke="#3e4a50" stroke-width="0.8"/></svg><svg class="a" style="left:129px;top:652px" width="16" height="16"><rect x="0.5" y="0.5" width="15" height="15" fill="#ffff00" stroke="#000"/><line x1="1" y1="15" x2="15" y2="1" stroke="#000" stroke-width="1"/><line x1="2.5" y1="3.5" x2="7" y2="3.5" stroke="#000" stroke-width="0.9"/><line x1="2.5" y1="6.3" x2="7" y2="6.3" stroke="#000" stroke-width="0.9"/><path d="M8.5 12 Q10 10 11.5 12 T14.5 12" fill="none" stroke="#000" stroke-width="1.2"/></svg><div class="t" style="left:149px;top:654.9px;font-size:11px;color:#1a1a1a">SI16 (18/18) - Total in cable l...</div><div class="t" style="left:300px;width:42px;text-align:right;top:654.9px;font-size:11px;color:#1a1a1a">3</div><div class="t" style="left:350px;width:87px;text-align:right;top:654.9px;font-size:11px;color:#1a1a1a">259.68</div><div class="t" style="left:450px;top:654.9px;font-size:11px;color:#1a1a1a">SK-A</div><svg class="a" style="left:92px;top:675px" width="9" height="9"><rect x="0.5" y="0.5" width="8" height="8" fill="url(#gexp)" stroke="#9a9a9a"/><path d="M2 4.5 H7 M4.5 2 V7" stroke="#000" stroke-width="1.2"/></svg><svg class="a" style="left:112px;top:671.5px" width="9" height="14"><path d="M4.5 0.6 C7.3 0.6 8.4 2.6 8.4 4.5 C8.4 6.5 6.6 7.4 6 9.3 L3 9.3 C2.4 7.4 0.6 6.5 0.6 4.5 C0.6 2.6 1.7 0.6 4.5 0.6Z" fill="url(#gbulb)" stroke="#3e4a50" stroke-width="0.9"/><rect x="3.1" y="9.3" width="2.8" height="4.1" fill="#f4f4f4" stroke="#3e4a50" stroke-width="0.8"/></svg><svg class="a" style="left:129px;top:671px" width="16" height="16"><rect x="0.5" y="0.5" width="15" height="15" fill="#ffff00" stroke="#000"/><line x1="1" y1="15" x2="15" y2="1" stroke="#000" stroke-width="1"/><line x1="2.5" y1="3.5" x2="7" y2="3.5" stroke="#000" stroke-width="0.9"/><line x1="2.5" y1="6.3" x2="7" y2="6.3" stroke="#000" stroke-width="0.9"/><path d="M8.5 12 Q10 10 11.5 12 T14.5 12" fill="none" stroke="#000" stroke-width="1.2"/></svg><div class="t" style="left:149px;top:673.9px;font-size:11px;color:#1a1a1a">SI17 (18/18) - Total in cable l...</div><div class="t" style="left:300px;width:42px;text-align:right;top:673.9px;font-size:11px;color:#1a1a1a">3</div><div class="t" style="left:350px;width:87px;text-align:right;top:673.9px;font-size:11px;color:#1a1a1a">218.97</div><div class="t" style="left:450px;top:673.9px;font-size:11px;color:#1a1a1a">SK-A</div><svg class="a" style="left:92px;top:694px" width="9" height="9"><rect x="0.5" y="0.5" width="8" height="8" fill="url(#gexp)" stroke="#9a9a9a"/><path d="M2 4.5 H7 M4.5 2 V7" stroke="#000" stroke-width="1.2"/></svg><svg class="a" style="left:112px;top:690.5px" width="9" height="14"><path d="M4.5 0.6 C7.3 0.6 8.4 2.6 8.4 4.5 C8.4 6.5 6.6 7.4 6 9.3 L3 9.3 C2.4 7.4 0.6 6.5 0.6 4.5 C0.6 2.6 1.7 0.6 4.5 0.6Z" fill="url(#gbulb)" stroke="#3e4a50" stroke-width="0.9"/><rect x="3.1" y="9.3" width="2.8" height="4.1" fill="#f4f4f4" stroke="#3e4a50" stroke-width="0.8"/></svg><svg class="a" style="left:129px;top:690px" width="16" height="16"><rect x="0.5" y="0.5" width="15" height="15" fill="#ffff00" stroke="#000"/><line x1="1" y1="15" x2="15" y2="1" stroke="#000" stroke-width="1"/><line x1="2.5" y1="3.5" x2="7" y2="3.5" stroke="#000" stroke-width="0.9"/><line x1="2.5" y1="6.3" x2="7" y2="6.3" stroke="#000" stroke-width="0.9"/><path d="M8.5 12 Q10 10 11.5 12 T14.5 12" fill="none" stroke="#000" stroke-width="1.2"/></svg><div class="t" style="left:149px;top:692.9px;font-size:11px;color:#1a1a1a">SI18 (18/18) - Total in cable l...</div><div class="t" style="left:300px;width:42px;text-align:right;top:692.9px;font-size:11px;color:#1a1a1a">3</div><div class="t" style="left:350px;width:87px;text-align:right;top:692.9px;font-size:11px;color:#1a1a1a">185.85</div><div class="t" style="left:450px;top:692.9px;font-size:11px;color:#1a1a1a">SK-A</div><svg class="a" style="left:92px;top:713px" width="9" height="9"><rect x="0.5" y="0.5" width="8" height="8" fill="url(#gexp)" stroke="#9a9a9a"/><path d="M2 4.5 H7 M4.5 2 V7" stroke="#000" stroke-width="1.2"/></svg><svg class="a" style="left:112px;top:709.5px" width="9" height="14"><path d="M4.5 0.6 C7.3 0.6 8.4 2.6 8.4 4.5 C8.4 6.5 6.6 7.4 6 9.3 L3 9.3 C2.4 7.4 0.6 6.5 0.6 4.5 C0.6 2.6 1.7 0.6 4.5 0.6Z" fill="url(#gbulb)" stroke="#3e4a50" stroke-width="0.9"/><rect x="3.1" y="9.3" width="2.8" height="4.1" fill="#f4f4f4" stroke="#3e4a50" stroke-width="0.8"/></svg><svg class="a" style="left:129px;top:709px" width="16" height="16"><rect x="0.5" y="0.5" width="15" height="15" fill="#ffff00" stroke="#000"/><line x1="1" y1="15" x2="15" y2="1" stroke="#000" stroke-width="1"/><line x1="2.5" y1="3.5" x2="7" y2="3.5" stroke="#000" stroke-width="0.9"/><line x1="2.5" y1="6.3" x2="7" y2="6.3" stroke="#000" stroke-width="0.9"/><path d="M8.5 12 Q10 10 11.5 12 T14.5 12" fill="none" stroke="#000" stroke-width="1.2"/></svg><div class="t" style="left:149px;top:711.9px;font-size:11px;color:#1a1a1a">SI19 (18/18) - Total in cable l...</div><div class="t" style="left:300px;width:42px;text-align:right;top:711.9px;font-size:11px;color:#1a1a1a">3</div><div class="t" style="left:350px;width:87px;text-align:right;top:711.9px;font-size:11px;color:#1a1a1a">161.76</div><div class="t" style="left:450px;top:711.9px;font-size:11px;color:#1a1a1a">SK-A</div><svg class="a" style="left:92px;top:732px" width="9" height="9"><rect x="0.5" y="0.5" width="8" height="8" fill="url(#gexp)" stroke="#9a9a9a"/><path d="M2 4.5 H7 M4.5 2 V7" stroke="#000" stroke-width="1.2"/></svg><svg class="a" style="left:112px;top:728.5px" width="9" height="14"><path d="M4.5 0.6 C7.3 0.6 8.4 2.6 8.4 4.5 C8.4 6.5 6.6 7.4 6 9.3 L3 9.3 C2.4 7.4 0.6 6.5 0.6 4.5 C0.6 2.6 1.7 0.6 4.5 0.6Z" fill="url(#gbulb)" stroke="#3e4a50" stroke-width="0.9"/><rect x="3.1" y="9.3" width="2.8" height="4.1" fill="#f4f4f4" stroke="#3e4a50" stroke-width="0.8"/></svg><svg class="a" style="left:129px;top:728px" width="16" height="16"><rect x="0.5" y="0.5" width="15" height="15" fill="#ffff00" stroke="#000"/><line x1="1" y1="15" x2="15" y2="1" stroke="#000" stroke-width="1"/><line x1="2.5" y1="3.5" x2="7" y2="3.5" stroke="#000" stroke-width="0.9"/><line x1="2.5" y1="6.3" x2="7" y2="6.3" stroke="#000" stroke-width="0.9"/><path d="M8.5 12 Q10 10 11.5 12 T14.5 12" fill="none" stroke="#000" stroke-width="1.2"/></svg><div class="t" style="left:149px;top:730.9px;font-size:11px;color:#1a1a1a">SI20 (18/18) - Total in cable l...</div><div class="t" style="left:300px;width:42px;text-align:right;top:730.9px;font-size:11px;color:#1a1a1a">3</div><div class="t" style="left:350px;width:87px;text-align:right;top:730.9px;font-size:11px;color:#1a1a1a">128.64</div><div class="t" style="left:450px;top:730.9px;font-size:11px;color:#1a1a1a">SK-A</div><svg class="a" style="left:92px;top:751px" width="9" height="9"><rect x="0.5" y="0.5" width="8" height="8" fill="url(#gexp)" stroke="#9a9a9a"/><path d="M2 4.5 H7 M4.5 2 V7" stroke="#000" stroke-width="1.2"/></svg><svg class="a" style="left:112px;top:747.5px" width="9" height="14"><path d="M4.5 0.6 C7.3 0.6 8.4 2.6 8.4 4.5 C8.4 6.5 6.6 7.4 6 9.3 L3 9.3 C2.4 7.4 0.6 6.5 0.6 4.5 C0.6 2.6 1.7 0.6 4.5 0.6Z" fill="url(#gbulb)" stroke="#3e4a50" stroke-width="0.9"/><rect x="3.1" y="9.3" width="2.8" height="4.1" fill="#f4f4f4" stroke="#3e4a50" stroke-width="0.8"/></svg><div class="t" style="left:129px;top:749.9px;font-size:11px;color:#1a1a1a">Out cables</div><svg class="a" style="left:0;top:0" width="480" height="460" font-family="Liberation Sans, sans-serif"><rect x="20.9" y="80.9" width="4" height="5" fill="#f2c81e" stroke="#5a4a00" stroke-width="0.6"/><line x1="26.2" y1="83.4" x2="40" y2="83.4" stroke="#e6c84e" stroke-width="1.1"/><line x1="23" y1="86" x2="23" y2="87.5" stroke="#e6c84e" stroke-width="1.1"/><rect x="24.8" y="86.8" width="4" height="5" fill="#f2c81e" stroke="#5a4a00" stroke-width="0.6"/><line x1="30" y1="89.3" x2="36.7" y2="89.3" stroke="#e6c84e" stroke-width="1.1"/><rect x="24.8" y="93" width="4" height="5" fill="#f2c81e" stroke="#5a4a00" stroke-width="0.6"/><line x1="30" y1="95.5" x2="43" y2="95.5" stroke="#e6c84e" stroke-width="1.1"/><rect x="29" y="99" width="4" height="5" fill="#f2c81e" stroke="#5a4a00" stroke-width="0.6"/><line x1="34" y1="101.4" x2="44" y2="101.4" stroke="#e6c84e" stroke-width="1.1"/><rect x="29" y="104.9" width="4" height="5" fill="#f2c81e" stroke="#5a4a00" stroke-width="0.6"/><line x1="34" y1="107.3" x2="44" y2="107.3" stroke="#e6c84e" stroke-width="1.1"/><polygon points="44.5,79.7 45.8,85.1 50.4,82.2 47.5,86.8 52.9,88.1 47.5,89.4 50.4,94.0 45.8,91.1 44.5,96.5 43.2,91.1 38.6,94.0 41.5,89.4 36.1,88.1 41.5,86.8 38.6,82.2 43.2,85.1" fill="#f3d98a"/><rect x="64.9" y="80.9" width="4" height="5" fill="#f2c81e" stroke="#5a4a00" stroke-width="0.6"/><line x1="70.2" y1="83.4" x2="88" y2="83.4" stroke="#e6c84e" stroke-width="1.1"/><line x1="67" y1="86" x2="67" y2="87.5" stroke="#e6c84e" stroke-width="1.1"/><rect x="68.8" y="86.8" width="4" height="5" fill="#f2c81e" stroke="#5a4a00" stroke-width="0.6"/><line x1="74" y1="89.3" x2="88" y2="89.3" stroke="#e6c84e" stroke-width="1.1"/><rect x="68.8" y="93" width="4" height="5" fill="#f2c81e" stroke="#5a4a00" stroke-width="0.6"/><line x1="74" y1="95.5" x2="88" y2="95.5" stroke="#e6c84e" stroke-width="1.1"/><rect x="73" y="99" width="4" height="5" fill="#f2c81e" stroke="#5a4a00" stroke-width="0.6"/><line x1="78" y1="101.4" x2="88" y2="101.4" stroke="#e6c84e" stroke-width="1.1"/><rect x="73" y="104.9" width="4" height="5" fill="#f2c81e" stroke="#5a4a00" stroke-width="0.6"/><line x1="78" y1="107.3" x2="88" y2="107.3" stroke="#e6c84e" stroke-width="1.1"/><path d="M84.7 99.7 L95.10000000000001 110.10000000000001 M95.10000000000001 99.7 L84.7 110.10000000000001" stroke="#ef5b6b" stroke-width="3.4" stroke-linecap="butt"/><line x1="113.5" y1="81" x2="113.5" y2="89" stroke="#f2c81e" stroke-width="1.2"/><line x1="113.5" y1="89" x2="113.5" y2="97" stroke="#7fb0e8" stroke-width="1.2"/><line x1="113.5" y1="82" x2="118" y2="82" stroke="#f2c81e" stroke-width="1.2"/><line x1="113.5" y1="86" x2="116" y2="86" stroke="#f2c81e" stroke-width="1"/><rect x="116" y="85" width="5" height="3" fill="#f2c81e" stroke="#5a4a00" stroke-width="0.6"/><line x1="121" y1="86.5" x2="124" y2="86.5" stroke="#f2c81e" stroke-width="1"/><rect x="124" y="85" width="5" height="3" fill="#f2c81e" stroke="#5a4a00" stroke-width="0.6"/><line x1="113.5" y1="91" x2="116" y2="91" stroke="#7fb0e8" stroke-width="1"/><rect x="116" y="90" width="5" height="3" fill="#f2c81e" stroke="#5a4a00" stroke-width="0.6"/><line x1="121" y1="91.5" x2="124" y2="91.5" stroke="#f2c81e" stroke-width="1"/><rect x="124" y="90" width="5" height="3" fill="#f2c81e" stroke="#5a4a00" stroke-width="0.6"/><line x1="113.5" y1="95.5" x2="116" y2="95.5" stroke="#7fb0e8" stroke-width="1"/><rect x="116" y="94.5" width="5" height="3" fill="#f2c81e" stroke="#5a4a00" stroke-width="0.6"/><line x1="121" y1="96.0" x2="124" y2="96.0" stroke="#f2c81e" stroke-width="1"/><rect x="124" y="94.5" width="5" height="3" fill="#f2c81e" stroke="#5a4a00" stroke-width="0.6"/><path d="M121.6 84.5 A2.9 2.9 0 0 1 126.80000000000001 82.9" fill="none" stroke="#5ad0a0" stroke-width="0.8"/><path d="M127.4 84.5 A2.9 2.9 0 0 1 122.19999999999999 86.1" fill="none" stroke="#5ad0a0" stroke-width="0.8"/><path d="M125.4 81.9 L127.4 83.3 L127.0 81.1" fill="none" stroke="#5ad0a0" stroke-width="0.7"/><line x1="113.5" y1="104" x2="113.5" y2="112" stroke="#f2c81e" stroke-width="1.2"/><line x1="113.5" y1="112" x2="113.5" y2="120" stroke="#7fb0e8" stroke-width="1.2"/><line x1="113.5" y1="105" x2="118" y2="105" stroke="#f2c81e" stroke-width="1.2"/><line x1="113.5" y1="109" x2="116" y2="109" stroke="#f2c81e" stroke-width="1"/><rect x="116" y="108" width="5" height="3" fill="#f2c81e" stroke="#5a4a00" stroke-width="0.6"/><line x1="121" y1="109.5" x2="124" y2="109.5" stroke="#f2c81e" stroke-width="1"/><rect x="124" y="108" width="5" height="3" fill="#f2c81e" stroke="#5a4a00" stroke-width="0.6"/><line x1="113.5" y1="114" x2="116" y2="114" stroke="#7fb0e8" stroke-width="1"/><rect x="116" y="113" width="5" height="3" fill="#f2c81e" stroke="#5a4a00" stroke-width="0.6"/><line x1="113.5" y1="118.5" x2="116" y2="118.5" stroke="#7fb0e8" stroke-width="1"/><rect x="116" y="117.5" width="5" height="3" fill="#f2c81e" stroke="#5a4a00" stroke-width="0.6"/><path d="M121.6 107.5 A2.9 2.9 0 0 1 126.80000000000001 105.9" fill="none" stroke="#5ad0a0" stroke-width="0.8"/><path d="M127.4 107.5 A2.9 2.9 0 0 1 122.19999999999999 109.1" fill="none" stroke="#5ad0a0" stroke-width="0.8"/><path d="M125.4 104.9 L127.4 106.3 L127.0 104.1" fill="none" stroke="#5ad0a0" stroke-width="0.7"/><path d="M120.9 112.9 L128.1 120.1 M128.1 112.9 L120.9 120.1" stroke="#ef5b6b" stroke-width="2.6" stroke-linecap="butt"/><text x="113" y="133" font-size="6" font-weight="bold" fill="#f2c81e">1</text><text x="113" y="138.5" font-size="6" font-weight="bold" fill="#f2c81e">2</text><text x="113" y="144" font-size="6" font-weight="bold" fill="#f2c81e">3</text><line x1="117" y1="131" x2="120" y2="131" stroke="#f2c81e" stroke-width="1"/><line x1="117" y1="136.5" x2="121" y2="136.5" stroke="#f2c81e" stroke-width="1"/><line x1="117" y1="141.5" x2="127" y2="141.5" stroke="#f2c81e" stroke-width="1"/><path d="M121.1 131.5 A2.9 2.9 0 0 1 126.30000000000001 129.9" fill="none" stroke="#5ad0a0" stroke-width="0.8"/><path d="M126.9 131.5 A2.9 2.9 0 0 1 121.69999999999999 133.1" fill="none" stroke="#5ad0a0" stroke-width="0.8"/><path d="M124.9 128.9 L126.9 130.3 L126.5 128.1" fill="none" stroke="#5ad0a0" stroke-width="0.7"/><line x1="219.5" y1="81" x2="219.5" y2="97" stroke="#f2c81e" stroke-width="1.2"/><line x1="219.5" y1="85.5" x2="221" y2="85.5" stroke="#f2c81e" stroke-width="1"/><rect x="221" y="84" width="14" height="3.4" fill="#2f8de4"/><path d="M222 85.7 H234" stroke="#9ad0ff" stroke-width="0.6" stroke-dasharray="2 1.5"/><line x1="219.5" y1="90.0" x2="221" y2="90.0" stroke="#f2c81e" stroke-width="1"/><rect x="221" y="88.5" width="14" height="3.4" fill="#2f8de4"/><path d="M222 90.2 H234" stroke="#9ad0ff" stroke-width="0.6" stroke-dasharray="2 1.5"/><line x1="219.5" y1="94.5" x2="221" y2="94.5" stroke="#f2c81e" stroke-width="1"/><rect x="221" y="93" width="14" height="3.4" fill="#2f8de4"/><path d="M222 94.7 H234" stroke="#9ad0ff" stroke-width="0.6" stroke-dasharray="2 1.5"/><path d="M226.1 84.5 A2.9 2.9 0 0 1 231.3 82.9" fill="none" stroke="#5ad0a0" stroke-width="0.8"/><path d="M231.9 84.5 A2.9 2.9 0 0 1 226.7 86.1" fill="none" stroke="#5ad0a0" stroke-width="0.8"/><path d="M229.9 81.9 L231.9 83.3 L231.5 81.1" fill="none" stroke="#5ad0a0" stroke-width="0.7"/><text x="218" y="118.5" font-size="17" font-weight="bold" fill="#f2c81e">$</text><rect x="228.5" y="103.5" width="7" height="9" fill="#e8f0ff" stroke="#c0c8d8" stroke-width="0.5"/><rect x="229.5" y="104.5" width="5" height="2" fill="#4a80c0"/><line x1="232" y1="113" x2="232" y2="119" stroke="#f2c81e" stroke-width="1"/><path d="M230 117 L232 119.5 L234 117" fill="none" stroke="#f2c81e" stroke-width="1"/><ellipse cx="223" cy="131" rx="3.8" ry="3.2" fill="none" stroke="#f2c81e" stroke-width="1.4"/><ellipse cx="223" cy="137" rx="3.8" ry="3.2" fill="none" stroke="#f2c81e" stroke-width="1.4"/><ellipse cx="230" cy="131" rx="3.8" ry="3.2" fill="none" stroke="#f2c81e" stroke-width="1.4"/><ellipse cx="230" cy="137" rx="3.8" ry="3.2" fill="none" stroke="#f2c81e" stroke-width="1.4"/><rect x="302.5" y="81.5" width="13" height="12" fill="none" stroke="#f2c81e" stroke-width="1.3"/><line x1="304" y1="92" x2="314" y2="83" stroke="#f0e0a0" stroke-width="0.9"/><line x1="304.5" y1="84.5" x2="308" y2="84.5" stroke="#f0e0a0" stroke-width="0.9"/><line x1="304.5" y1="86.5" x2="308" y2="86.5" stroke="#f0e0a0" stroke-width="0.9"/><path d="M306.5 96.5 L309 94 L311.5 96.5Z" fill="#e05a6a"/><path d="M302.5 119.5 V108 L304 106 V110 H307 V115 H316 V119.5 Z" fill="none" stroke="#c040c0" stroke-width="1.2"/><rect x="309" y="104" width="7" height="8" fill="#f4f4f4"/><rect x="313" y="114" width="3.5" height="3" fill="none" stroke="#f0f0f0" stroke-width="0.8"/><path d="M302.5 129 H309 M302.5 129 V133 H309" fill="none" stroke="#78b4f0" stroke-width="1.2"/><rect x="309" y="128" width="3" height="2" fill="#78b4f0"/><rect x="309" y="132" width="3" height="2" fill="#78b4f0"/><path d="M302.5 136 H310 M302.5 136 V141 H310" fill="none" stroke="#f2d020" stroke-width="1.4"/><rect x="310" y="135" width="4" height="2.4" fill="#f2d020"/><rect x="310" y="139.5" width="4" height="2.4" fill="#f2d020"/><path d="M313 132 V128.5 H316 M314.5 127 L313 128.5 L314.5 130" fill="none" stroke="#e0e0e0" stroke-width="0.9"/><path d="M414 89.5 A6.2 6.2 0 0 1 425.5 84.5" fill="none" stroke="#f2d23a" stroke-width="1.8"/><path d="M426 87.5 A6.2 6.2 0 0 1 414.5 92.5" fill="none" stroke="#f2d23a" stroke-width="1.8"/><path d="M423 81.5 L426.5 81.5 L426.5 85.5Z" fill="#f2d23a"/><path d="M417 95.5 L413.5 95.5 L413.5 91.5Z" fill="#f2d23a"/><path d="M437 89 L441.5 84.3 H448.5 L453 89 L448.5 93.7 H441.5Z" fill="none" stroke="#f0d040" stroke-width="1.5"/><circle cx="445" cy="89" r="2.6" fill="none" stroke="#f0c8a0" stroke-width="1"/><line x1="439" y1="95" x2="451" y2="83" stroke="#f4e8d0" stroke-width="0.9"/><path d="M413.5 107.5 H417 L418.5 105.5 H422.5 L424 107.5 H427.5 V118.5 H413.5Z" fill="none" stroke="#e8eaee" stroke-width="1.1"/><circle cx="420.5" cy="112.5" r="3.2" fill="none" stroke="#c8c8d0" stroke-width="1.2"/><rect x="415" y="109" width="1.5" height="1.2" fill="#e8eaee"/><circle cx="424.5" cy="116.5" r="3.2" fill="#2ec84a"/><path d="M438.5 107.5 H442 L443.5 105.5 H447.5 L449 107.5 H452.5 V118.5 H438.5Z" fill="none" stroke="#e8eaee" stroke-width="1.1"/><circle cx="445.5" cy="112.5" r="3.2" fill="none" stroke="#c8c8d0" stroke-width="1.2"/><rect x="440" y="109" width="1.5" height="1.2" fill="#e8eaee"/><rect x="446.5" y="113.5" width="6" height="5" fill="#d03070"/><circle cx="58.8" cy="177.5" r="3.8" fill="#f4f4d0" opacity="0.35"/><path d="M58.8 173.8 C61.8 173.8 62.3 176.5 62.2 178 C62 179.8 60.6 180.5 60.2 182 H57.4 C57 180.5 55.6 179.8 55.4 178 C55.3 176.5 55.8 173.8 58.8 173.8Z" fill="#f4f4d0"/><rect x="57.8" y="182" width="2" height="4" fill="#f0f0f0"/><path d="M64 176.2 H69.5 M67.5 174.2 L69.7 176.2 L67.5 178.2" fill="none" stroke="#f0b820" stroke-width="1.1"/><path d="M64 182.2 H69.5 M67.5 180.2 L69.7 182.2 L67.5 184.2" fill="none" stroke="#f0b820" stroke-width="1.1"/><path d="M77 176.2 H82.5 M80.5 174.2 L82.7 176.2 L80.5 178.2" fill="none" stroke="#f0b820" stroke-width="1.1"/><path d="M77 182.2 H82.5 M80.5 180.2 L82.7 182.2 L80.5 184.2" fill="none" stroke="#f0b820" stroke-width="1.1"/><circle cx="91.0" cy="177.5" r="3.8" fill="#f4f4d0" opacity="0.35"/><path d="M91.0 173.8 C94.0 173.8 94.5 176.5 94.4 178 C94.2 179.8 92.8 180.5 92.4 182 H89.60000000000001 C89.2 180.5 87.8 179.8 87.60000000000001 178 C87.5 176.5 88.0 173.8 91.0 173.8Z" fill="#f4f4d0"/><rect x="90.0" y="182" width="2" height="4" fill="#f0f0f0"/><rect x="100.2" y="173.5" width="1.6" height="15" fill="#9aa0aa"/><rect x="225.39999999999998" y="173.5" width="1.6" height="15" fill="#9aa0aa"/><rect x="252.2" y="173.5" width="1.6" height="15" fill="#9aa0aa"/><rect x="316.2" y="173.5" width="1.6" height="15" fill="#9aa0aa"/><rect x="108" y="174" width="12" height="12" fill="#ffff00"/><rect x="132" y="173.5" width="6" height="6" fill="#ffff00"/><rect x="138" y="173.5" width="6" height="6" fill="#ff0000"/><rect x="132" y="179.5" width="6" height="6.5" fill="#00e000"/><rect x="138" y="179.5" width="6" height="6.5" fill="#0020ff"/><path d="M154 179 H159.5 L156.75 182.3Z" fill="#f0f0f0"/><path d="M191 179 H196.5 L193.75 182.3Z" fill="#f0f0f0"/><path d="M282 179 H287.5 L284.75 182.3Z" fill="#f0f0f0"/><rect x="167" y="172.5" width="1.3" height="14" fill="#8a8f98"/><rect x="168" y="172.5" width="14" height="1" fill="#8a8f98"/><rect x="169" y="174" width="6" height="4.5" fill="#1030ff"/><rect x="176" y="174" width="6" height="4.5" fill="#ff1010"/><rect x="169" y="181" width="6" height="4.8" fill="#20e020"/><rect x="176" y="181" width="6" height="4.8" fill="#f0f020"/><circle cx="212" cy="176.5" r="4.8" fill="#ff0000"/><circle cx="208.7" cy="182.8" r="4.8" fill="#00ff00" opacity="0.9"/><circle cx="215.3" cy="182.8" r="4.8" fill="#0000ff" opacity="0.85"/><circle cx="212" cy="180.8" r="2" fill="#ffffff" opacity="0.8"/><circle cx="237.5" cy="179" r="5" fill="#50555f" stroke="#a0a4ac" stroke-width="1.4"/><line x1="241" y1="183" x2="246" y2="188" stroke="#a0a4ac" stroke-width="1.6"/><text x="241" y="178" font-size="7" fill="#a0a4ac">±</text><circle cx="261.8" cy="177.5" r="3.8" fill="#f4f4d0" opacity="0.35"/><path d="M261.8 173.8 C264.8 173.8 265.3 176.5 265.2 178 C265 179.8 263.6 180.5 263.2 182 H260.4 C260 180.5 258.6 179.8 258.4 178 C258.3 176.5 258.8 173.8 261.8 173.8Z" fill="#f4f4d0"/><rect x="260.8" y="182" width="2" height="4" fill="#f0f0f0"/><text x="265.5" y="188" font-size="14.5" font-weight="bold" fill="#22dd22">$</text><circle cx="298.40000000000003" cy="177.5" r="3.8" fill="#a8c8e8" opacity="0.35"/><path d="M298.40000000000003 173.8 C301.40000000000003 173.8 301.90000000000003 176.5 301.8 178 C301.6 179.8 300.20000000000005 180.5 299.8 182 H297.0 C296.6 180.5 295.20000000000005 179.8 295.0 178 C294.90000000000003 176.5 295.40000000000003 173.8 298.40000000000003 173.8Z" fill="#a8c8e8"/><rect x="297.40000000000003" y="182" width="2" height="4" fill="#f0f0f0"/><text x="302.8" y="188" font-size="14.5" font-weight="bold" fill="#22dd22">$</text><path d="M322 176 H333" stroke="#b0b4bc" stroke-width="1" stroke-dasharray="2 1.3"/><path d="M322 180.5 H333" stroke="#b0b4bc" stroke-width="1" stroke-dasharray="2 1.3"/><path d="M322 185 H333" stroke="#b0b4bc" stroke-width="1" stroke-dasharray="2 1.3"/><path d="M333.5 176 V185" stroke="#b0b4bc" stroke-width="0.9"/><polygon points="334.5,171.3 335.2,173.8 337.5,172.5 336.2,174.8 338.7,175.5 336.2,176.2 337.5,178.5 335.2,177.2 334.5,179.7 333.8,177.2 331.5,178.5 332.8,176.2 330.3,175.5 332.8,174.8 331.5,172.5 333.8,173.8" fill="#f4d060"/><path d="M41.44 186.68 L41.94 188.19 L44.79 188.59 L44.79 193.41 L41.94 193.81 L41.44 195.32 L41.44 195.32 L40.73 196.75 L42.45 199.05 L39.05 202.45 L36.75 200.73 L35.32 201.44 L35.32 201.44 L33.81 201.94 L33.41 204.79 L28.59 204.79 L28.19 201.94 L26.68 201.44 L26.68 201.44 L25.25 200.73 L22.95 202.45 L19.55 199.05 L21.27 196.75 L20.56 195.32 L20.56 195.32 L20.06 193.81 L17.21 193.41 L17.21 188.59 L20.06 188.19 L20.56 186.68 L20.56 186.68 L21.27 185.25 L19.55 182.95 L22.95 179.55 L25.25 181.27 L26.68 180.56 L26.68 180.56 L28.19 180.06 L28.59 177.21 L33.41 177.21 L33.81 180.06 L35.32 180.56 L35.32 180.56 L36.75 181.27 L39.05 179.55 L42.45 182.95 L40.73 185.25 L41.44 186.68Z" fill="none" stroke="#d8dadf" stroke-width="1.3" stroke-linejoin="round"/><circle cx="31" cy="191" r="7.0" fill="none" stroke="#d8dadf" stroke-width="1.3"/><path d="M28 191.2 L30.2 193.4 L34.4 188.8" fill="none" stroke="#d8dadf" stroke-width="1.3"/><rect x="17.5" y="216.5" width="7.5" height="3" fill="none" stroke="#5ba0e0" stroke-width="1"/><rect x="27.5" y="216.5" width="7.5" height="3" fill="none" stroke="#5ba0e0" stroke-width="1"/><rect x="37.5" y="216.5" width="7.5" height="3" fill="none" stroke="#5ba0e0" stroke-width="1"/><rect x="17.5" y="221.5" width="7.5" height="3" fill="none" stroke="#5ba0e0" stroke-width="1"/><rect x="27.5" y="221.5" width="7.5" height="3" fill="none" stroke="#5ba0e0" stroke-width="1"/><rect x="37.5" y="221.5" width="7.5" height="3" fill="none" stroke="#5ba0e0" stroke-width="1"/><rect x="17.5" y="226.5" width="7.5" height="3" fill="none" stroke="#5ba0e0" stroke-width="1"/><rect x="27.5" y="226.5" width="7.5" height="3" fill="none" stroke="#5ba0e0" stroke-width="1"/><rect x="37.5" y="226.5" width="7.5" height="3" fill="none" stroke="#5ba0e0" stroke-width="1"/><rect x="17.5" y="231.5" width="7.5" height="3" fill="none" stroke="#5ba0e0" stroke-width="1"/><rect x="27.5" y="231.5" width="7.5" height="3" fill="none" stroke="#5ba0e0" stroke-width="1"/><rect x="37.5" y="231.5" width="7.5" height="3" fill="none" stroke="#5ba0e0" stroke-width="1"/><rect x="17.5" y="236.5" width="7.5" height="3" fill="none" stroke="#5ba0e0" stroke-width="1"/><rect x="27.5" y="236.5" width="7.5" height="3" fill="none" stroke="#5ba0e0" stroke-width="1"/><rect x="37.5" y="236.5" width="7.5" height="3" fill="none" stroke="#5ba0e0" stroke-width="1"/><rect x="17.5" y="241.5" width="7.5" height="3" fill="none" stroke="#5ba0e0" stroke-width="1"/><rect x="27.5" y="241.5" width="7.5" height="3" fill="none" stroke="#5ba0e0" stroke-width="1"/><rect x="37.5" y="241.5" width="7.5" height="3" fill="none" stroke="#5ba0e0" stroke-width="1"/><rect x="18" y="259.5" width="26" height="16" fill="#3aa0f0"/><line x1="23.2" y1="259.5" x2="23.2" y2="275.5" stroke="#22272f" stroke-width="0.8"/><line x1="28.4" y1="259.5" x2="28.4" y2="275.5" stroke="#22272f" stroke-width="0.8"/><line x1="33.6" y1="259.5" x2="33.6" y2="275.5" stroke="#22272f" stroke-width="0.8"/><line x1="38.8" y1="259.5" x2="38.8" y2="275.5" stroke="#22272f" stroke-width="0.8"/><line x1="18" y1="267.5" x2="44" y2="267.5" stroke="#22272f" stroke-width="0.8"/><line x1="21.5" y1="275.5" x2="21.5" y2="284" stroke="#c8ccd4" stroke-width="1"/><line x1="40.5" y1="275.5" x2="40.5" y2="284" stroke="#c8ccd4" stroke-width="1"/><rect x="17" y="295" width="4" height="4.4" fill="#f0c020"/><line x1="21" y1="297.2" x2="44" y2="297.2" stroke="#f0c020" stroke-width="1"/><rect x="21" y="301" width="4" height="4.4" fill="#f0c020"/><line x1="25" y1="303.2" x2="44" y2="303.2" stroke="#f0c020" stroke-width="1"/><rect x="21" y="307" width="4" height="4.4" fill="#f0c020"/><line x1="25" y1="309.2" x2="44" y2="309.2" stroke="#f0c020" stroke-width="1"/><rect x="25" y="313" width="4" height="4.4" fill="#f0c020"/><line x1="29" y1="315.2" x2="44" y2="315.2" stroke="#f0c020" stroke-width="1"/><rect x="25" y="319" width="4" height="4.4" fill="#f0c020"/><line x1="29" y1="321.2" x2="44" y2="321.2" stroke="#f0c020" stroke-width="1"/><path d="M42.99 346.44 L43.41 347.69 L45.73 348.02 L45.73 351.98 L43.41 352.31 L42.99 353.56 L42.99 353.56 L42.40 354.73 L43.81 356.61 L41.01 359.41 L39.13 358.00 L37.96 358.59 L37.96 358.59 L36.71 359.01 L36.38 361.33 L32.42 361.33 L32.09 359.01 L30.84 358.59 L30.84 358.59 L29.67 358.00 L27.79 359.41 L24.99 356.61 L26.40 354.73 L25.81 353.56 L25.81 353.56 L25.39 352.31 L23.07 351.98 L23.07 348.02 L25.39 347.69 L25.81 346.44 L25.81 346.44 L26.40 345.27 L24.99 343.39 L27.79 340.59 L29.67 342.00 L30.84 341.41 L30.84 341.41 L32.09 340.99 L32.42 338.67 L36.38 338.67 L36.71 340.99 L37.96 341.41 L37.96 341.41 L39.13 342.00 L41.01 340.59 L43.81 343.39 L42.40 345.27 L42.99 346.44Z" fill="none" stroke="#f0c020" stroke-width="1.3" stroke-linejoin="round"/><circle cx="34.4" cy="350" r="5.8" fill="none" stroke="#f0c020" stroke-width="1.3"/><path d="M31.4 350.2 L33.6 352.4 L37.8 347.8" fill="none" stroke="#f0c020" stroke-width="1.3"/><rect x="13" y="371" width="36" height="40" fill="#2e333d"/><path d="M13.5 411 V371.5 H49" fill="none" stroke="#f0f0f0" stroke-width="1.2"/><rect x="23" y="383" width="7" height="2.6" fill="#e060a0"/><rect x="30" y="383" width="5" height="2.6" fill="#c09090"/><polygon points="40.0,379.5 40.8,382.7 43.5,381.0 41.8,383.7 45.0,384.5 41.8,385.3 43.5,388.0 40.8,386.3 40.0,389.5 39.2,386.3 36.5,388.0 38.2,385.3 35.0,384.5 38.2,383.7 36.5,381.0 39.2,382.7" fill="#f8d020"/><rect x="23" y="388.5" width="23.5" height="2.6" fill="#d8c080"/><rect x="23" y="393.5" width="23.5" height="2.6" fill="#50d890"/><rect x="23" y="398.5" width="23.5" height="2.6" fill="#70a8e8"/><rect x="13" y="411" width="35" height="39" fill="#2a2f38"/><line x1="13" y1="451" x2="48" y2="451" stroke="#c0c4cc" stroke-width="0.8"/><path d="M20 442 L36 424" stroke="#f0a030" stroke-width="3.2" stroke-linecap="round"/><path d="M30 419 L38 417 L46 425 L43 427 L37 423 Z" fill="#d8d8e0"/><path d="M19 420 L41 442" stroke="#d0d0d8" stroke-width="3"/><circle cx="19.5" cy="420" r="3.5" fill="none" stroke="#d0d0d8" stroke-width="2.2"/><circle cx="41.5" cy="442" r="3.5" fill="none" stroke="#d0d0d8" stroke-width="2.2"/></svg><div class="a" style="left:480px;top:0;width:891px;height:952px;background:#232932"></div><svg class="a" style="left:480px;top:0" width="891" height="952"><line x1="17.60" y1="0" x2="17.60" y2="952" stroke="#363b45" stroke-width="1"/><line x1="59.02" y1="0" x2="59.02" y2="952" stroke="#363b45" stroke-width="1"/><line x1="100.44" y1="0" x2="100.44" y2="952" stroke="#363b45" stroke-width="1"/><line x1="141.86" y1="0" x2="141.86" y2="952" stroke="#363b45" stroke-width="1"/><line x1="183.28" y1="0" x2="183.28" y2="952" stroke="#363b45" stroke-width="1"/><line x1="224.70" y1="0" x2="224.70" y2="952" stroke="#363b45" stroke-width="1"/><line x1="266.12" y1="0" x2="266.12" y2="952" stroke="#363b45" stroke-width="1"/><line x1="307.54" y1="0" x2="307.54" y2="952" stroke="#363b45" stroke-width="1"/><line x1="348.96" y1="0" x2="348.96" y2="952" stroke="#363b45" stroke-width="1"/><line x1="390.38" y1="0" x2="390.38" y2="952" stroke="#363b45" stroke-width="1"/><line x1="431.80" y1="0" x2="431.80" y2="952" stroke="#363b45" stroke-width="1"/><line x1="473.22" y1="0" x2="473.22" y2="952" stroke="#363b45" stroke-width="1"/><line x1="514.64" y1="0" x2="514.64" y2="952" stroke="#363b45" stroke-width="1"/><line x1="556.06" y1="0" x2="556.06" y2="952" stroke="#363b45" stroke-width="1"/><line x1="597.48" y1="0" x2="597.48" y2="952" stroke="#363b45" stroke-width="1"/><line x1="638.90" y1="0" x2="638.90" y2="952" stroke="#363b45" stroke-width="1"/><line x1="680.32" y1="0" x2="680.32" y2="952" stroke="#363b45" stroke-width="1"/><line x1="721.74" y1="0" x2="721.74" y2="952" stroke="#363b45" stroke-width="1"/><line x1="763.16" y1="0" x2="763.16" y2="952" stroke="#363b45" stroke-width="1"/><line x1="804.58" y1="0" x2="804.58" y2="952" stroke="#363b45" stroke-width="1"/><line x1="846.00" y1="0" x2="846.00" y2="952" stroke="#363b45" stroke-width="1"/><line x1="887.42" y1="0" x2="887.42" y2="952" stroke="#363b45" stroke-width="1"/><line x1="0" y1="30.60" x2="891" y2="30.60" stroke="#363b45" stroke-width="1"/><line x1="0" y1="72.06" x2="891" y2="72.06" stroke="#363b45" stroke-width="1"/><line x1="0" y1="113.52" x2="891" y2="113.52" stroke="#363b45" stroke-width="1"/><line x1="0" y1="154.98" x2="891" y2="154.98" stroke="#363b45" stroke-width="1"/><line x1="0" y1="196.44" x2="891" y2="196.44" stroke="#363b45" stroke-width="1"/><line x1="0" y1="237.90" x2="891" y2="237.90" stroke="#363b45" stroke-width="1"/><line x1="0" y1="279.36" x2="891" y2="279.36" stroke="#363b45" stroke-width="1"/><line x1="0" y1="320.82" x2="891" y2="320.82" stroke="#363b45" stroke-width="1"/><line x1="0" y1="362.28" x2="891" y2="362.28" stroke="#363b45" stroke-width="1"/><line x1="0" y1="403.74" x2="891" y2="403.74" stroke="#363b45" stroke-width="1"/><line x1="0" y1="445.20" x2="891" y2="445.20" stroke="#363b45" stroke-width="1"/><line x1="0" y1="486.66" x2="891" y2="486.66" stroke="#363b45" stroke-width="1"/><line x1="0" y1="528.12" x2="891" y2="528.12" stroke="#363b45" stroke-width="1"/><line x1="0" y1="569.58" x2="891" y2="569.58" stroke="#363b45" stroke-width="1"/><line x1="0" y1="611.04" x2="891" y2="611.04" stroke="#363b45" stroke-width="1"/><line x1="0" y1="652.50" x2="891" y2="652.50" stroke="#363b45" stroke-width="1"/><line x1="0" y1="693.96" x2="891" y2="693.96" stroke="#363b45" stroke-width="1"/><line x1="0" y1="735.42" x2="891" y2="735.42" stroke="#363b45" stroke-width="1"/><line x1="0" y1="776.88" x2="891" y2="776.88" stroke="#363b45" stroke-width="1"/><line x1="0" y1="818.34" x2="891" y2="818.34" stroke="#363b45" stroke-width="1"/><line x1="0" y1="859.80" x2="891" y2="859.80" stroke="#363b45" stroke-width="1"/><line x1="0" y1="901.26" x2="891" y2="901.26" stroke="#363b45" stroke-width="1"/><line x1="0" y1="942.72" x2="891" y2="942.72" stroke="#363b45" stroke-width="1"/></svg><div class="a" style="left:480px;top:0;width:891px;height:2px;background:#3a4250"></div><div class="t" style="left:483.5px;top:8px;font-size:12.4px;color:#d8dce2">[&#8722;][Oben][2D-Drahtk&#246;rper]</div><svg class="a" style="left:480px;top:0;opacity:0.995" width="891" height="952" viewBox="480 0 891 952" font-family="Liberation Sans, sans-serif"><rect x="561.5" y="180.5" width="35.0" height="17.0" stroke="#eef0f2" stroke-width="1.35" fill="none"/><line x1="562.1" y1="198.5" x2="596.4" y2="198.5" stroke="#eef0f2" stroke-width="1.0" stroke-linecap="square"/><polyline points="561.6,180.1 571.9,188.6 561.6,197.0" fill="none" stroke="#eef0f2" stroke-width="1.35"/><text x="575.0" y="191.8" font-size="8.6" text-anchor="start" fill="#eef0f2" font-weight="normal" letter-spacing="0.3">22</text><text x="549.8" y="191.9" font-size="9.2" text-anchor="start" fill="#eef0f2" font-weight="normal" >32</text><text x="572.6" y="177.4" font-size="3.8" font-weight="bold" fill="#eef0f2" textLength="14.0" lengthAdjust="spacingAndGlyphs">Yingli</text><text x="554.3" y="202.9" font-size="4.1" font-weight="bold" fill="#eef0f2" textLength="49.8" lengthAdjust="spacingAndGlyphs">Yingli YL 230-29b/100</text><line x1="596.9" y1="188.5" x2="696.0" y2="188.5" stroke="#eef0f2" stroke-width="1.35" stroke-linecap="square"/><rect x="614.7" y="183.2" width="16.3" height="3.8" fill="#eef0f2"/><rect x="696.5" y="180.5" width="17.0" height="17.0" stroke="#eef0f2" stroke-width="1.35" fill="none"/><path d="M700.2 184.4 H704.8 V192.8 H700.2 M700.2 188.6 H709.0" fill="none" stroke="#eef0f2" stroke-width="1.1"/><text x="689.0" y="202.5" font-size="3.8" font-weight="bold" fill="#eef0f2" textLength="31.0" lengthAdjust="spacingAndGlyphs">Yingli YL 230</text><text x="702.0" y="177.6" font-size="3.8" font-weight="bold" fill="#eef0f2" textLength="5.0" lengthAdjust="spacingAndGlyphs">Yi</text><rect x="561.5" y="213.5" width="35.0" height="17.0" stroke="#eef0f2" stroke-width="1.35" fill="none"/><line x1="562.1" y1="231.5" x2="596.4" y2="231.5" stroke="#eef0f2" stroke-width="1.0" stroke-linecap="square"/><polyline points="561.6,213.1 571.9,221.6 561.6,230.0" fill="none" stroke="#eef0f2" stroke-width="1.35"/><text x="575.0" y="224.8" font-size="8.6" text-anchor="start" fill="#eef0f2" font-weight="normal" letter-spacing="0.3">22</text><text x="549.8" y="224.9" font-size="9.2" text-anchor="start" fill="#eef0f2" font-weight="normal" >32</text><text x="572.6" y="210.4" font-size="3.8" font-weight="bold" fill="#eef0f2" textLength="14.0" lengthAdjust="spacingAndGlyphs">Yingli</text><text x="554.3" y="235.9" font-size="4.1" font-weight="bold" fill="#eef0f2" textLength="49.8" lengthAdjust="spacingAndGlyphs">Yingli YL 230-29b/100</text><line x1="596.9" y1="221.5" x2="696.0" y2="221.5" stroke="#eef0f2" stroke-width="1.35" stroke-linecap="square"/><rect x="614.7" y="216.2" width="16.3" height="3.8" fill="#eef0f2"/><rect x="696.5" y="213.5" width="17.0" height="17.0" stroke="#eef0f2" stroke-width="1.35" fill="none"/><path d="M700.2 217.4 H704.8 V225.8 H700.2 M700.2 221.6 H709.0" fill="none" stroke="#eef0f2" stroke-width="1.1"/><text x="689.0" y="235.5" font-size="3.8" font-weight="bold" fill="#eef0f2" textLength="31.0" lengthAdjust="spacingAndGlyphs">Yingli YL 230</text><text x="702.0" y="210.6" font-size="3.8" font-weight="bold" fill="#eef0f2" textLength="5.0" lengthAdjust="spacingAndGlyphs">Yi</text><circle cx="646.2" cy="198.3" r="2.2" fill="none" stroke="#eef0f2" stroke-width="1"/><circle cx="646.2" cy="204.8" r="2.2" fill="none" stroke="#eef0f2" stroke-width="1"/><circle cx="646.2" cy="211.4" r="2.2" fill="none" stroke="#eef0f2" stroke-width="1"/><text x="650.6" y="208.4" font-size="9.5" text-anchor="start" fill="#eef0f2" font-weight="normal" >2</text><rect x="731.0" y="183.2" width="20.2" height="3.8" fill="#eef0f2"/><rect x="731.0" y="189.2" width="11.7" height="3.8" fill="#eef0f2"/><rect x="731.0" y="216.2" width="14.0" height="3.8" fill="#eef0f2"/><rect x="731.0" y="222.2" width="10.0" height="3.8" fill="#eef0f2"/><line x1="713.0" y1="188.5" x2="812.0" y2="188.5" stroke="#eef0f2" stroke-width="1.35" stroke-linecap="square"/><line x1="713.0" y1="221.5" x2="762.4" y2="221.5" stroke="#eef0f2" stroke-width="1.35" stroke-linecap="square"/><line x1="762.5" y1="188.6" x2="762.5" y2="221.6" stroke="#eef0f2" stroke-width="1.35" stroke-linecap="square"/><rect x="812.5" y="180.5" width="17.0" height="16.0" stroke="#eef0f2" stroke-width="1.35" fill="none"/><line x1="812.0" y1="196.7" x2="829.0" y2="180.1" stroke="#eef0f2" stroke-width="1.1" stroke-linecap="square"/><rect x="815.0" y="183.1" width="2.6" height="2.3" fill="#eef0f2"/><rect x="823.3" y="192.1" width="2.6" height="1.7" fill="#eef0f2"/><text x="818.0" y="177.4" font-size="3.8" font-weight="bold" fill="#eef0f2" textLength="4.0" lengthAdjust="spacingAndGlyphs">Yi</text><text x="794.0" y="202.0" font-size="3.8" font-weight="bold" fill="#eef0f2" textLength="52.0" lengthAdjust="spacingAndGlyphs">Yingli YL 230-29b/1000</text><text x="808.0" y="206.6" font-size="3.8" font-weight="bold" fill="#eef0f2" textLength="24.0" lengthAdjust="spacingAndGlyphs">Yingli YL </text><rect x="847.0" y="183.2" width="19.7" height="3.8" fill="#eef0f2"/><rect x="847.0" y="189.2" width="3.7" height="3.8" fill="#eef0f2"/><line x1="829.0" y1="188.5" x2="927.8" y2="188.5" stroke="#eef0f2" stroke-width="1.35" stroke-linecap="square"/><rect x="927.5" y="184.5" width="18.0" height="8.0" stroke="#eef0f2" stroke-width="1.35" fill="none"/><path d="M927.8 188.6 H932.6 L935.8 186.6 M936.3 187.6 L938.4 189.8 M937.8 188.6 H945.0" fill="none" stroke="#eef0f2" stroke-width="1"/><line x1="945.0" y1="188.5" x2="1027.3" y2="188.5" stroke="#eef0f2" stroke-width="1.35" stroke-linecap="square"/><rect x="1027.5" y="171.5" width="34.0" height="34.0" stroke="#eef0f2" stroke-width="1.35" fill="none"/><circle cx="1044.2" cy="183.8" r="7.2" fill="none" stroke="#eef0f2" stroke-width="1.1"/><circle cx="1044.2" cy="192.8" r="7.2" fill="none" stroke="#eef0f2" stroke-width="1.1"/><text x="1041.0" y="168.9" font-size="3.8" font-weight="bold" fill="#eef0f2" textLength="6.7" lengthAdjust="spacingAndGlyphs">Yi</text><text x="1017.7" y="211.3" font-size="3.8" font-weight="bold" fill="#eef0f2" textLength="53.3" lengthAdjust="spacingAndGlyphs">Yingli YL 230-29b/1000V</text><text x="1022.5" y="215.4" font-size="3.8" font-weight="bold" fill="#eef0f2" textLength="43.5" lengthAdjust="spacingAndGlyphs">Yingli YL 230-29b/</text><line x1="1061.0" y1="188.5" x2="1143.4" y2="188.5" stroke="#eef0f2" stroke-width="1.35" stroke-linecap="square"/><rect x="1079.0" y="183.2" width="20.0" height="3.8" fill="#eef0f2"/><rect x="1079.0" y="189.2" width="12.0" height="3.8" fill="#eef0f2"/><line x1="1102.5" y1="188.6" x2="1102.5" y2="271.2" stroke="#eef0f2" stroke-width="1.35" stroke-linecap="square"/><rect x="1143.5" y="171.5" width="34.0" height="34.0" stroke="#eef0f2" stroke-width="1.35" fill="none"/><circle cx="1160.3" cy="183.8" r="7.2" fill="none" stroke="#eef0f2" stroke-width="1.1"/><circle cx="1160.3" cy="192.8" r="7.2" fill="none" stroke="#eef0f2" stroke-width="1.1"/><text x="1157.0" y="168.9" font-size="3.8" font-weight="bold" fill="#eef0f2" textLength="7.0" lengthAdjust="spacingAndGlyphs">Yin</text><text x="1134.0" y="211.3" font-size="3.8" font-weight="bold" fill="#eef0f2" textLength="53.0" lengthAdjust="spacingAndGlyphs">Yingli YL 230-29b/1000V</text><text x="1139.0" y="215.4" font-size="3.8" font-weight="bold" fill="#eef0f2" textLength="43.0" lengthAdjust="spacingAndGlyphs">Yingli YL 230-29b/</text><line x1="1177.2" y1="188.5" x2="1259.0" y2="188.5" stroke="#eef0f2" stroke-width="1.35" stroke-linecap="square"/><rect x="1194.9" y="183.2" width="20.1" height="3.8" fill="#eef0f2"/><rect x="1194.9" y="189.2" width="12.1" height="3.8" fill="#eef0f2"/><line x1="1218.5" y1="188.6" x2="1218.5" y2="387.3" stroke="#eef0f2" stroke-width="1.35" stroke-linecap="square"/><rect x="1259.5" y="171.5" width="34.0" height="34.0" stroke="#eef0f2" stroke-width="1.35" fill="none"/><line x1="1259.0" y1="184.5" x2="1293.4" y2="184.5" stroke="#eef0f2" stroke-width="1.1" stroke-linecap="square"/><text x="1266.0" y="181.5" font-size="4.1" font-weight="bold" fill="#eef0f2" textLength="21.0" lengthAdjust="spacingAndGlyphs">Yingli YL</text><text x="1276.2" y="198.2" font-size="8.6" text-anchor="middle" fill="#eef0f2" font-weight="normal" letter-spacing="0.3">kW</text><text x="1274.0" y="168.9" font-size="3.8" font-weight="bold" fill="#eef0f2" textLength="5.0" lengthAdjust="spacingAndGlyphs">Yi</text><line x1="1293.4" y1="188.5" x2="1309.8" y2="188.5" stroke="#eef0f2" stroke-width="1.35" stroke-linecap="square"/><rect x="677.5" y="262.5" width="35.0" height="17.0" stroke="#eef0f2" stroke-width="1.35" fill="none"/><line x1="677.9" y1="280.5" x2="712.2" y2="280.5" stroke="#eef0f2" stroke-width="1.0" stroke-linecap="square"/><polyline points="677.4,262.8 687.7,271.3 677.4,279.7" fill="none" stroke="#eef0f2" stroke-width="1.35"/><text x="690.8" y="274.5" font-size="8.6" text-anchor="start" fill="#eef0f2" font-weight="normal" letter-spacing="0.3">22</text><text x="665.6" y="274.6" font-size="9.2" text-anchor="start" fill="#eef0f2" font-weight="normal" >24</text><text x="688.4" y="260.1" font-size="3.8" font-weight="bold" fill="#eef0f2" textLength="14.0" lengthAdjust="spacingAndGlyphs">Yingli</text><text x="670.1" y="285.6" font-size="4.1" font-weight="bold" fill="#eef0f2" textLength="49.8" lengthAdjust="spacingAndGlyphs">Yingli YL 230-29b/100</text><line x1="712.7" y1="271.5" x2="812.0" y2="271.5" stroke="#eef0f2" stroke-width="1.35" stroke-linecap="square"/><rect x="731.0" y="265.9" width="15.6" height="3.8" fill="#eef0f2"/><rect x="812.5" y="262.5" width="17.0" height="17.0" stroke="#eef0f2" stroke-width="1.35" fill="none"/><path d="M816.2 267.1 H820.8 V275.5 H816.2 M816.2 271.3 H825.0" fill="none" stroke="#eef0f2" stroke-width="1.1"/><text x="805.0" y="285.3" font-size="3.8" font-weight="bold" fill="#eef0f2" textLength="31.0" lengthAdjust="spacingAndGlyphs">Yingli YL 230</text><text x="818.0" y="260.4" font-size="3.8" font-weight="bold" fill="#eef0f2" textLength="5.0" lengthAdjust="spacingAndGlyphs">Yi</text><rect x="847.0" y="265.9" width="14.0" height="3.8" fill="#eef0f2"/><rect x="847.0" y="271.9" width="11.8" height="3.8" fill="#eef0f2"/><line x1="829.0" y1="271.5" x2="878.5" y2="271.5" stroke="#eef0f2" stroke-width="1.35" stroke-linecap="square"/><rect x="677.5" y="295.5" width="35.0" height="17.0" stroke="#eef0f2" stroke-width="1.35" fill="none"/><line x1="677.9" y1="313.5" x2="712.2" y2="313.5" stroke="#eef0f2" stroke-width="1.0" stroke-linecap="square"/><polyline points="677.4,295.8 687.7,304.3 677.4,312.7" fill="none" stroke="#eef0f2" stroke-width="1.35"/><text x="690.8" y="307.5" font-size="8.6" text-anchor="start" fill="#eef0f2" font-weight="normal" letter-spacing="0.3">22</text><text x="665.6" y="307.6" font-size="9.2" text-anchor="start" fill="#eef0f2" font-weight="normal" >24</text><text x="688.4" y="293.1" font-size="3.8" font-weight="bold" fill="#eef0f2" textLength="14.0" lengthAdjust="spacingAndGlyphs">Yingli</text><text x="670.1" y="318.6" font-size="4.1" font-weight="bold" fill="#eef0f2" textLength="49.8" lengthAdjust="spacingAndGlyphs">Yingli YL 230-29b/100</text><line x1="712.7" y1="304.5" x2="812.0" y2="304.5" stroke="#eef0f2" stroke-width="1.35" stroke-linecap="square"/><rect x="731.0" y="298.9" width="15.6" height="3.8" fill="#eef0f2"/><rect x="812.5" y="295.5" width="17.0" height="17.0" stroke="#eef0f2" stroke-width="1.35" fill="none"/><path d="M816.2 300.1 H820.8 V308.5 H816.2 M816.2 304.3 H825.0" fill="none" stroke="#eef0f2" stroke-width="1.1"/><text x="805.0" y="318.3" font-size="3.8" font-weight="bold" fill="#eef0f2" textLength="31.0" lengthAdjust="spacingAndGlyphs">Yingli YL 230</text><text x="818.0" y="293.4" font-size="3.8" font-weight="bold" fill="#eef0f2" textLength="5.0" lengthAdjust="spacingAndGlyphs">Yi</text><rect x="847.0" y="298.9" width="14.0" height="3.8" fill="#eef0f2"/><rect x="847.0" y="304.9" width="11.8" height="3.8" fill="#eef0f2"/><line x1="829.0" y1="304.5" x2="878.5" y2="304.5" stroke="#eef0f2" stroke-width="1.35" stroke-linecap="square"/><rect x="677.5" y="329.5" width="35.0" height="16.0" stroke="#eef0f2" stroke-width="1.35" fill="none"/><line x1="677.9" y1="347.5" x2="712.2" y2="347.5" stroke="#eef0f2" stroke-width="1.0" stroke-linecap="square"/><polyline points="677.4,329.0 687.7,337.5 677.4,345.9" fill="none" stroke="#eef0f2" stroke-width="1.35"/><text x="690.8" y="340.7" font-size="8.6" text-anchor="start" fill="#eef0f2" font-weight="normal" letter-spacing="0.3">22</text><text x="665.6" y="340.8" font-size="9.2" text-anchor="start" fill="#eef0f2" font-weight="normal" >8</text><text x="688.4" y="326.3" font-size="3.8" font-weight="bold" fill="#eef0f2" textLength="14.0" lengthAdjust="spacingAndGlyphs">Yingli</text><text x="670.1" y="351.8" font-size="4.1" font-weight="bold" fill="#eef0f2" textLength="49.8" lengthAdjust="spacingAndGlyphs">Yingli YL 230-29b/100</text><line x1="712.7" y1="337.5" x2="812.0" y2="337.5" stroke="#eef0f2" stroke-width="1.35" stroke-linecap="square"/><rect x="731.0" y="332.1" width="15.6" height="3.8" fill="#eef0f2"/><rect x="812.5" y="329.5" width="17.0" height="16.0" stroke="#eef0f2" stroke-width="1.35" fill="none"/><path d="M816.2 333.3 H820.8 V341.7 H816.2 M816.2 337.5 H825.0" fill="none" stroke="#eef0f2" stroke-width="1.1"/><text x="805.0" y="351.5" font-size="3.8" font-weight="bold" fill="#eef0f2" textLength="31.0" lengthAdjust="spacingAndGlyphs">Yingli YL 230</text><text x="818.0" y="326.6" font-size="3.8" font-weight="bold" fill="#eef0f2" textLength="5.0" lengthAdjust="spacingAndGlyphs">Yi</text><rect x="847.0" y="332.1" width="14.0" height="3.8" fill="#eef0f2"/><rect x="847.0" y="338.1" width="11.8" height="3.8" fill="#eef0f2"/><line x1="829.0" y1="337.5" x2="878.5" y2="337.5" stroke="#eef0f2" stroke-width="1.35" stroke-linecap="square"/><circle cx="762.1" cy="281.0" r="2.2" fill="none" stroke="#eef0f2" stroke-width="1"/><circle cx="762.1" cy="287.7" r="2.2" fill="none" stroke="#eef0f2" stroke-width="1"/><circle cx="762.1" cy="294.3" r="2.2" fill="none" stroke="#eef0f2" stroke-width="1"/><text x="766.5" y="291.3" font-size="9.5" text-anchor="start" fill="#eef0f2" font-weight="normal" >3</text><line x1="878.5" y1="271.3" x2="878.5" y2="337.5" stroke="#eef0f2" stroke-width="1.35" stroke-linecap="square"/><line x1="878.5" y1="271.5" x2="928.2" y2="271.5" stroke="#eef0f2" stroke-width="1.35" stroke-linecap="square"/><rect x="928.5" y="262.5" width="17.0" height="17.0" stroke="#eef0f2" stroke-width="1.35" fill="none"/><line x1="928.2" y1="279.4" x2="945.2" y2="262.8" stroke="#eef0f2" stroke-width="1.1" stroke-linecap="square"/><rect x="931.2" y="265.8" width="2.6" height="2.3" fill="#eef0f2"/><rect x="939.5" y="274.8" width="2.6" height="1.7" fill="#eef0f2"/><text x="933.0" y="260.4" font-size="3.8" font-weight="bold" fill="#eef0f2" textLength="6.6" lengthAdjust="spacingAndGlyphs">Yi</text><text x="910.0" y="285.2" font-size="3.8" font-weight="bold" fill="#eef0f2" textLength="52.7" lengthAdjust="spacingAndGlyphs">Yingli YL 230-29b/1000</text><text x="924.0" y="290.3" font-size="3.8" font-weight="bold" fill="#eef0f2" textLength="25.0" lengthAdjust="spacingAndGlyphs">Yingli YL </text><line x1="945.2" y1="271.5" x2="1044.0" y2="271.5" stroke="#eef0f2" stroke-width="1.35" stroke-linecap="square"/><rect x="962.7" y="265.7" width="20.2" height="3.8" fill="#eef0f2"/><rect x="962.7" y="271.7" width="4.3" height="3.8" fill="#eef0f2"/><rect x="1044.5" y="266.5" width="17.0" height="9.0" stroke="#eef0f2" stroke-width="1.35" fill="none"/><path d="M1044.0 271.1 H1048.8 L1052.0 269.1 M1052.5 270.1 L1054.6 272.3 M1054.0 271.1 H1061.2" fill="none" stroke="#eef0f2" stroke-width="1"/><line x1="1061.0" y1="271.5" x2="1102.3" y2="271.5" stroke="#eef0f2" stroke-width="1.35" stroke-linecap="square"/><rect x="628.5" y="378.5" width="35.0" height="17.0" stroke="#eef0f2" stroke-width="1.35" fill="none"/><line x1="628.5" y1="397.5" x2="662.8" y2="397.5" stroke="#eef0f2" stroke-width="1.0" stroke-linecap="square"/><polyline points="628.0,378.9 638.3,387.4 628.0,395.8" fill="none" stroke="#eef0f2" stroke-width="1.35"/><text x="641.4" y="390.6" font-size="8.6" text-anchor="start" fill="#eef0f2" font-weight="normal" letter-spacing="0.3">22</text><text x="616.2" y="390.7" font-size="9.2" text-anchor="start" fill="#eef0f2" font-weight="normal" >2</text><text x="639.0" y="376.2" font-size="3.8" font-weight="bold" fill="#eef0f2" textLength="14.0" lengthAdjust="spacingAndGlyphs">Yingli</text><text x="620.7" y="401.7" font-size="4.1" font-weight="bold" fill="#eef0f2" textLength="49.8" lengthAdjust="spacingAndGlyphs">Yingli YL 230-29b/100</text><line x1="663.3" y1="387.5" x2="762.2" y2="387.5" stroke="#eef0f2" stroke-width="1.35" stroke-linecap="square"/><rect x="681.0" y="382.0" width="15.9" height="3.8" fill="#eef0f2"/><rect x="762.5" y="383.5" width="17.0" height="8.0" stroke="#eef0f2" stroke-width="1.35" fill="none"/><text x="767.7" y="388.8" font-size="3.2" font-weight="bold" fill="#eef0f2" textLength="6.5" lengthAdjust="spacingAndGlyphs">Yi</text><text x="765.7" y="380.7" font-size="3.5" font-weight="bold" fill="#eef0f2" textLength="9.9" lengthAdjust="spacingAndGlyphs">Ying</text><line x1="779.7" y1="387.5" x2="795.4" y2="387.5" stroke="#eef0f2" stroke-width="1.35" stroke-linecap="square"/><rect x="628.5" y="411.5" width="35.0" height="17.0" stroke="#eef0f2" stroke-width="1.35" fill="none"/><line x1="628.5" y1="430.5" x2="662.8" y2="430.5" stroke="#eef0f2" stroke-width="1.0" stroke-linecap="square"/><polyline points="628.0,411.9 638.3,420.4 628.0,428.8" fill="none" stroke="#eef0f2" stroke-width="1.35"/><text x="641.4" y="423.6" font-size="8.6" text-anchor="start" fill="#eef0f2" font-weight="normal" letter-spacing="0.3">22</text><text x="616.2" y="423.7" font-size="9.2" text-anchor="start" fill="#eef0f2" font-weight="normal" >2</text><text x="639.0" y="409.2" font-size="3.8" font-weight="bold" fill="#eef0f2" textLength="14.0" lengthAdjust="spacingAndGlyphs">Yingli</text><text x="620.7" y="434.7" font-size="4.1" font-weight="bold" fill="#eef0f2" textLength="49.8" lengthAdjust="spacingAndGlyphs">Yingli YL 230-29b/100</text><line x1="663.3" y1="420.5" x2="762.2" y2="420.5" stroke="#eef0f2" stroke-width="1.35" stroke-linecap="square"/><rect x="681.0" y="415.0" width="15.9" height="3.8" fill="#eef0f2"/><rect x="762.5" y="416.5" width="17.0" height="8.0" stroke="#eef0f2" stroke-width="1.35" fill="none"/><text x="767.7" y="421.8" font-size="3.2" font-weight="bold" fill="#eef0f2" textLength="6.5" lengthAdjust="spacingAndGlyphs">Yi</text><text x="765.7" y="413.7" font-size="3.5" font-weight="bold" fill="#eef0f2" textLength="9.9" lengthAdjust="spacingAndGlyphs">Ying</text><line x1="779.7" y1="420.5" x2="795.4" y2="420.5" stroke="#eef0f2" stroke-width="1.35" stroke-linecap="square"/><line x1="795.5" y1="387.4" x2="795.5" y2="420.4" stroke="#eef0f2" stroke-width="1.35" stroke-linecap="square"/><line x1="795.4" y1="387.5" x2="811.8" y2="387.5" stroke="#eef0f2" stroke-width="1.35" stroke-linecap="square"/><rect x="811.5" y="379.5" width="17.0" height="16.0" stroke="#eef0f2" stroke-width="1.35" fill="none"/><line x1="811.8" y1="395.7" x2="828.8" y2="379.1" stroke="#eef0f2" stroke-width="1.1" stroke-linecap="square"/><rect x="814.8" y="382.1" width="2.6" height="2.3" fill="#eef0f2"/><rect x="823.1" y="391.1" width="2.6" height="1.7" fill="#eef0f2"/><text x="817.6" y="376.4" font-size="3.8" font-weight="bold" fill="#eef0f2" textLength="5.8" lengthAdjust="spacingAndGlyphs">Yi</text><text x="801.3" y="401.3" font-size="3.8" font-weight="bold" fill="#eef0f2" textLength="39.1" lengthAdjust="spacingAndGlyphs">Yingli YL 230-29b</text><text x="807.0" y="405.9" font-size="3.8" font-weight="bold" fill="#eef0f2" textLength="26.3" lengthAdjust="spacingAndGlyphs">Yingli YL 2</text><rect x="745.5" y="370.5" width="100.0" height="63.0" stroke="#8e939b" stroke-width="1.0" fill="none"/><circle cx="712.6" cy="397.3" r="2.2" fill="none" stroke="#eef0f2" stroke-width="1"/><circle cx="712.6" cy="404.0" r="2.2" fill="none" stroke="#eef0f2" stroke-width="1"/><circle cx="712.6" cy="410.5" r="2.2" fill="none" stroke="#eef0f2" stroke-width="1"/><text x="717.0" y="407.6" font-size="9.5" text-anchor="start" fill="#eef0f2" font-weight="normal" >7</text><line x1="828.8" y1="387.5" x2="927.8" y2="387.5" stroke="#eef0f2" stroke-width="1.35" stroke-linecap="square"/><rect x="847.1" y="382.0" width="19.9" height="3.8" fill="#eef0f2"/><rect x="847.1" y="388.0" width="10.8" height="3.8" fill="#eef0f2"/><rect x="927.5" y="383.5" width="18.0" height="8.0" stroke="#eef0f2" stroke-width="1.35" fill="none"/><path d="M927.8 387.4 H932.6 L935.8 385.4 M936.3 386.4 L938.4 388.6 M937.8 387.4 H945.0" fill="none" stroke="#eef0f2" stroke-width="1"/><circle cx="762.4" cy="438.8" r="2.2" fill="none" stroke="#eef0f2" stroke-width="1"/><circle cx="762.4" cy="445.4" r="2.2" fill="none" stroke="#eef0f2" stroke-width="1"/><circle cx="762.4" cy="452.3" r="2.2" fill="none" stroke="#eef0f2" stroke-width="1"/><text x="766.8" y="449.0" font-size="9.5" text-anchor="start" fill="#eef0f2" font-weight="normal" >2</text><rect x="628.5" y="461.5" width="35.0" height="17.0" stroke="#eef0f2" stroke-width="1.35" fill="none"/><line x1="628.5" y1="479.5" x2="662.8" y2="479.5" stroke="#eef0f2" stroke-width="1.0" stroke-linecap="square"/><polyline points="628.0,461.3 638.3,469.8 628.0,478.2" fill="none" stroke="#eef0f2" stroke-width="1.35"/><text x="641.4" y="473.0" font-size="8.6" text-anchor="start" fill="#eef0f2" font-weight="normal" letter-spacing="0.3">22</text><text x="616.2" y="473.1" font-size="9.2" text-anchor="start" fill="#eef0f2" font-weight="normal" >2</text><text x="639.0" y="458.6" font-size="3.8" font-weight="bold" fill="#eef0f2" textLength="14.0" lengthAdjust="spacingAndGlyphs">Yingli</text><text x="620.7" y="484.1" font-size="4.1" font-weight="bold" fill="#eef0f2" textLength="49.8" lengthAdjust="spacingAndGlyphs">Yingli YL 230-29b/100</text><line x1="663.3" y1="469.5" x2="762.2" y2="469.5" stroke="#eef0f2" stroke-width="1.35" stroke-linecap="square"/><rect x="681.0" y="464.4" width="15.9" height="3.8" fill="#eef0f2"/><rect x="762.5" y="465.5" width="17.0" height="9.0" stroke="#eef0f2" stroke-width="1.35" fill="none"/><text x="767.7" y="471.2" font-size="3.2" font-weight="bold" fill="#eef0f2" textLength="6.5" lengthAdjust="spacingAndGlyphs">Yi</text><text x="765.7" y="463.1" font-size="3.5" font-weight="bold" fill="#eef0f2" textLength="9.9" lengthAdjust="spacingAndGlyphs">Ying</text><line x1="779.7" y1="469.5" x2="795.4" y2="469.5" stroke="#eef0f2" stroke-width="1.35" stroke-linecap="square"/><rect x="628.5" y="494.5" width="35.0" height="17.0" stroke="#eef0f2" stroke-width="1.35" fill="none"/><line x1="628.5" y1="512.5" x2="662.8" y2="512.5" stroke="#eef0f2" stroke-width="1.0" stroke-linecap="square"/><polyline points="628.0,494.2 638.3,502.7 628.0,511.1" fill="none" stroke="#eef0f2" stroke-width="1.35"/><text x="641.4" y="505.9" font-size="8.6" text-anchor="start" fill="#eef0f2" font-weight="normal" letter-spacing="0.3">22</text><text x="616.2" y="506.0" font-size="9.2" text-anchor="start" fill="#eef0f2" font-weight="normal" >2</text><text x="639.0" y="491.5" font-size="3.8" font-weight="bold" fill="#eef0f2" textLength="14.0" lengthAdjust="spacingAndGlyphs">Yingli</text><text x="620.7" y="517.0" font-size="4.1" font-weight="bold" fill="#eef0f2" textLength="49.8" lengthAdjust="spacingAndGlyphs">Yingli YL 230-29b/100</text><line x1="663.3" y1="502.5" x2="762.2" y2="502.5" stroke="#eef0f2" stroke-width="1.35" stroke-linecap="square"/><rect x="681.0" y="497.3" width="15.9" height="3.8" fill="#eef0f2"/><rect x="762.5" y="498.5" width="17.0" height="9.0" stroke="#eef0f2" stroke-width="1.35" fill="none"/><text x="767.7" y="504.1" font-size="3.2" font-weight="bold" fill="#eef0f2" textLength="6.5" lengthAdjust="spacingAndGlyphs">Yi</text><text x="765.7" y="496.0" font-size="3.5" font-weight="bold" fill="#eef0f2" textLength="9.9" lengthAdjust="spacingAndGlyphs">Ying</text><line x1="779.7" y1="502.5" x2="795.4" y2="502.5" stroke="#eef0f2" stroke-width="1.35" stroke-linecap="square"/><line x1="795.5" y1="469.8" x2="795.5" y2="502.7" stroke="#eef0f2" stroke-width="1.35" stroke-linecap="square"/><line x1="795.4" y1="469.5" x2="811.8" y2="469.5" stroke="#eef0f2" stroke-width="1.35" stroke-linecap="square"/><rect x="811.5" y="461.5" width="17.0" height="17.0" stroke="#eef0f2" stroke-width="1.35" fill="none"/><line x1="811.8" y1="478.1" x2="828.8" y2="461.5" stroke="#eef0f2" stroke-width="1.1" stroke-linecap="square"/><rect x="814.8" y="464.5" width="2.6" height="2.3" fill="#eef0f2"/><rect x="823.1" y="473.5" width="2.6" height="1.7" fill="#eef0f2"/><text x="817.6" y="458.8" font-size="3.8" font-weight="bold" fill="#eef0f2" textLength="5.8" lengthAdjust="spacingAndGlyphs">Yi</text><text x="801.3" y="483.7" font-size="3.8" font-weight="bold" fill="#eef0f2" textLength="39.1" lengthAdjust="spacingAndGlyphs">Yingli YL 230-29b</text><text x="807.0" y="488.3" font-size="3.8" font-weight="bold" fill="#eef0f2" textLength="26.3" lengthAdjust="spacingAndGlyphs">Yingli YL 2</text><rect x="745.5" y="453.5" width="100.0" height="62.0" stroke="#8e939b" stroke-width="1.0" fill="none"/><circle cx="712.6" cy="480.0" r="2.2" fill="none" stroke="#eef0f2" stroke-width="1"/><circle cx="712.6" cy="486.7" r="2.2" fill="none" stroke="#eef0f2" stroke-width="1"/><circle cx="712.6" cy="493.3" r="2.2" fill="none" stroke="#eef0f2" stroke-width="1"/><text x="717.0" y="490.3" font-size="9.5" text-anchor="start" fill="#eef0f2" font-weight="normal" >7</text><line x1="828.8" y1="469.5" x2="927.8" y2="469.5" stroke="#eef0f2" stroke-width="1.35" stroke-linecap="square"/><rect x="847.1" y="464.4" width="19.9" height="3.8" fill="#eef0f2"/><rect x="847.1" y="470.4" width="10.8" height="3.8" fill="#eef0f2"/><rect x="927.5" y="465.5" width="18.0" height="8.0" stroke="#eef0f2" stroke-width="1.35" fill="none"/><path d="M927.8 469.8 H932.6 L935.8 467.8 M936.3 468.8 L938.4 471.0 M937.8 469.8 H945.0" fill="none" stroke="#eef0f2" stroke-width="1"/><rect x="628.5" y="544.5" width="35.0" height="17.0" stroke="#eef0f2" stroke-width="1.35" fill="none"/><line x1="628.5" y1="562.5" x2="662.8" y2="562.5" stroke="#eef0f2" stroke-width="1.0" stroke-linecap="square"/><polyline points="628.0,544.8 638.3,553.3 628.0,561.7" fill="none" stroke="#eef0f2" stroke-width="1.35"/><text x="641.4" y="556.5" font-size="8.6" text-anchor="start" fill="#eef0f2" font-weight="normal" letter-spacing="0.3">20</text><text x="616.2" y="556.6" font-size="9.2" text-anchor="start" fill="#eef0f2" font-weight="normal" >1</text><text x="639.0" y="542.1" font-size="3.8" font-weight="bold" fill="#eef0f2" textLength="14.0" lengthAdjust="spacingAndGlyphs">Yingli</text><text x="620.7" y="567.6" font-size="4.1" font-weight="bold" fill="#eef0f2" textLength="49.8" lengthAdjust="spacingAndGlyphs">Yingli YL 230-29b/100</text><line x1="663.3" y1="553.5" x2="762.2" y2="553.5" stroke="#eef0f2" stroke-width="1.35" stroke-linecap="square"/><rect x="681.0" y="547.9" width="15.9" height="3.8" fill="#eef0f2"/><rect x="681.0" y="553.9" width="11.5" height="3.8" fill="#eef0f2"/><rect x="762.5" y="549.5" width="17.0" height="8.0" stroke="#eef0f2" stroke-width="1.35" fill="none"/><text x="767.7" y="554.7" font-size="3.2" font-weight="bold" fill="#eef0f2" textLength="6.5" lengthAdjust="spacingAndGlyphs">Yi</text><text x="765.7" y="546.6" font-size="3.5" font-weight="bold" fill="#eef0f2" textLength="9.9" lengthAdjust="spacingAndGlyphs">Ying</text><line x1="779.7" y1="553.5" x2="795.4" y2="553.5" stroke="#eef0f2" stroke-width="1.35" stroke-linecap="square"/><rect x="628.5" y="577.5" width="35.0" height="17.0" stroke="#eef0f2" stroke-width="1.35" fill="none"/><line x1="628.5" y1="595.5" x2="662.8" y2="595.5" stroke="#eef0f2" stroke-width="1.0" stroke-linecap="square"/><polyline points="628.0,577.8 638.3,586.3 628.0,594.7" fill="none" stroke="#eef0f2" stroke-width="1.35"/><text x="641.4" y="589.5" font-size="8.6" text-anchor="start" fill="#eef0f2" font-weight="normal" letter-spacing="0.3">20</text><text x="616.2" y="589.6" font-size="9.2" text-anchor="start" fill="#eef0f2" font-weight="normal" >1</text><text x="639.0" y="575.1" font-size="3.8" font-weight="bold" fill="#eef0f2" textLength="14.0" lengthAdjust="spacingAndGlyphs">Yingli</text><text x="620.7" y="600.6" font-size="4.1" font-weight="bold" fill="#eef0f2" textLength="49.8" lengthAdjust="spacingAndGlyphs">Yingli YL 230-29b/100</text><line x1="663.3" y1="586.5" x2="762.2" y2="586.5" stroke="#eef0f2" stroke-width="1.35" stroke-linecap="square"/><rect x="681.0" y="580.9" width="15.9" height="3.8" fill="#eef0f2"/><rect x="681.0" y="586.9" width="11.5" height="3.8" fill="#eef0f2"/><rect x="762.5" y="582.5" width="17.0" height="8.0" stroke="#eef0f2" stroke-width="1.35" fill="none"/><text x="767.7" y="587.7" font-size="3.2" font-weight="bold" fill="#eef0f2" textLength="6.5" lengthAdjust="spacingAndGlyphs">Yi</text><text x="765.7" y="579.6" font-size="3.5" font-weight="bold" fill="#eef0f2" textLength="9.9" lengthAdjust="spacingAndGlyphs">Ying</text><line x1="779.7" y1="586.5" x2="795.4" y2="586.5" stroke="#eef0f2" stroke-width="1.35" stroke-linecap="square"/><rect x="628.5" y="610.5" width="35.0" height="17.0" stroke="#eef0f2" stroke-width="1.35" fill="none"/><line x1="628.5" y1="628.5" x2="662.8" y2="628.5" stroke="#eef0f2" stroke-width="1.0" stroke-linecap="square"/><polyline points="628.0,610.7 638.3,619.2 628.0,627.6" fill="none" stroke="#eef0f2" stroke-width="1.35"/><text x="641.4" y="622.4" font-size="8.6" text-anchor="start" fill="#eef0f2" font-weight="normal" letter-spacing="0.3">22</text><text x="616.2" y="622.5" font-size="9.2" text-anchor="start" fill="#eef0f2" font-weight="normal" >2</text><text x="639.0" y="608.0" font-size="3.8" font-weight="bold" fill="#eef0f2" textLength="14.0" lengthAdjust="spacingAndGlyphs">Yingli</text><text x="620.7" y="633.5" font-size="4.1" font-weight="bold" fill="#eef0f2" textLength="49.8" lengthAdjust="spacingAndGlyphs">Yingli YL 230-29b/100</text><line x1="663.3" y1="619.5" x2="762.2" y2="619.5" stroke="#eef0f2" stroke-width="1.35" stroke-linecap="square"/><rect x="681.0" y="613.8" width="15.9" height="3.8" fill="#eef0f2"/><rect x="762.5" y="614.5" width="17.0" height="9.0" stroke="#eef0f2" stroke-width="1.35" fill="none"/><text x="767.7" y="620.6" font-size="3.2" font-weight="bold" fill="#eef0f2" textLength="6.5" lengthAdjust="spacingAndGlyphs">Yi</text><text x="765.7" y="612.5" font-size="3.5" font-weight="bold" fill="#eef0f2" textLength="9.9" lengthAdjust="spacingAndGlyphs">Ying</text><line x1="779.7" y1="619.5" x2="795.4" y2="619.5" stroke="#eef0f2" stroke-width="1.35" stroke-linecap="square"/><rect x="628.5" y="643.5" width="35.0" height="17.0" stroke="#eef0f2" stroke-width="1.35" fill="none"/><line x1="628.5" y1="661.5" x2="662.8" y2="661.5" stroke="#eef0f2" stroke-width="1.0" stroke-linecap="square"/><polyline points="628.0,643.7 638.3,652.2 628.0,660.6" fill="none" stroke="#eef0f2" stroke-width="1.35"/><text x="641.4" y="655.4" font-size="8.6" text-anchor="start" fill="#eef0f2" font-weight="normal" letter-spacing="0.3">22</text><text x="616.2" y="655.5" font-size="9.2" text-anchor="start" fill="#eef0f2" font-weight="normal" >2</text><text x="639.0" y="641.0" font-size="3.8" font-weight="bold" fill="#eef0f2" textLength="14.0" lengthAdjust="spacingAndGlyphs">Yingli</text><text x="620.7" y="666.5" font-size="4.1" font-weight="bold" fill="#eef0f2" textLength="49.8" lengthAdjust="spacingAndGlyphs">Yingli YL 230-29b/100</text><line x1="663.3" y1="652.5" x2="762.2" y2="652.5" stroke="#eef0f2" stroke-width="1.35" stroke-linecap="square"/><rect x="681.0" y="646.8" width="15.9" height="3.8" fill="#eef0f2"/><rect x="762.5" y="647.5" width="17.0" height="9.0" stroke="#eef0f2" stroke-width="1.35" fill="none"/><text x="767.7" y="653.6" font-size="3.2" font-weight="bold" fill="#eef0f2" textLength="6.5" lengthAdjust="spacingAndGlyphs">Yi</text><text x="765.7" y="645.5" font-size="3.5" font-weight="bold" fill="#eef0f2" textLength="9.9" lengthAdjust="spacingAndGlyphs">Ying</text><line x1="779.7" y1="652.5" x2="795.4" y2="652.5" stroke="#eef0f2" stroke-width="1.35" stroke-linecap="square"/><line x1="795.5" y1="553.3" x2="795.5" y2="652.2" stroke="#eef0f2" stroke-width="1.35" stroke-linecap="square"/><line x1="795.4" y1="553.5" x2="811.8" y2="553.5" stroke="#eef0f2" stroke-width="1.35" stroke-linecap="square"/><rect x="811.5" y="545.5" width="17.0" height="16.0" stroke="#eef0f2" stroke-width="1.35" fill="none"/><line x1="811.8" y1="561.6" x2="828.8" y2="545.0" stroke="#eef0f2" stroke-width="1.1" stroke-linecap="square"/><rect x="814.8" y="548.0" width="2.6" height="2.3" fill="#eef0f2"/><rect x="823.1" y="557.0" width="2.6" height="1.7" fill="#eef0f2"/><text x="817.6" y="542.3" font-size="3.8" font-weight="bold" fill="#eef0f2" textLength="5.8" lengthAdjust="spacingAndGlyphs">Yi</text><text x="801.3" y="567.2" font-size="3.8" font-weight="bold" fill="#eef0f2" textLength="39.1" lengthAdjust="spacingAndGlyphs">Yingli YL 230-29b</text><text x="807.0" y="571.8" font-size="3.8" font-weight="bold" fill="#eef0f2" textLength="26.3" lengthAdjust="spacingAndGlyphs">Yingli YL 2</text><rect x="745.5" y="536.5" width="100.0" height="129.0" stroke="#8e939b" stroke-width="1.0" fill="none"/><circle cx="712.6" cy="628.6" r="2.2" fill="none" stroke="#eef0f2" stroke-width="1"/><circle cx="712.6" cy="635.6" r="2.2" fill="none" stroke="#eef0f2" stroke-width="1"/><circle cx="712.6" cy="642.6" r="2.2" fill="none" stroke="#eef0f2" stroke-width="1"/><text x="717.0" y="639.2" font-size="9.5" text-anchor="start" fill="#eef0f2" font-weight="normal" >5</text><line x1="828.8" y1="553.5" x2="927.8" y2="553.5" stroke="#eef0f2" stroke-width="1.35" stroke-linecap="square"/><rect x="847.1" y="547.9" width="19.9" height="3.8" fill="#eef0f2"/><rect x="847.1" y="553.9" width="10.8" height="3.8" fill="#eef0f2"/><rect x="927.5" y="548.5" width="18.0" height="9.0" stroke="#eef0f2" stroke-width="1.35" fill="none"/><path d="M927.8 553.3 H932.6 L935.8 551.3 M936.3 552.3 L938.4 554.5 M937.8 553.3 H945.0" fill="none" stroke="#eef0f2" stroke-width="1"/><rect x="628.5" y="693.5" width="35.0" height="17.0" stroke="#eef0f2" stroke-width="1.35" fill="none"/><line x1="628.5" y1="711.5" x2="662.8" y2="711.5" stroke="#eef0f2" stroke-width="1.0" stroke-linecap="square"/><polyline points="628.0,693.6 638.3,702.1 628.0,710.5" fill="none" stroke="#eef0f2" stroke-width="1.35"/><text x="641.4" y="705.3" font-size="8.6" text-anchor="start" fill="#eef0f2" font-weight="normal" letter-spacing="0.3">22</text><text x="616.2" y="705.4" font-size="9.2" text-anchor="start" fill="#eef0f2" font-weight="normal" >2</text><text x="639.0" y="690.9" font-size="3.8" font-weight="bold" fill="#eef0f2" textLength="14.0" lengthAdjust="spacingAndGlyphs">Yingli</text><text x="620.7" y="716.4" font-size="4.1" font-weight="bold" fill="#eef0f2" textLength="49.8" lengthAdjust="spacingAndGlyphs">Yingli YL 230-29b/100</text><line x1="663.3" y1="702.5" x2="762.2" y2="702.5" stroke="#eef0f2" stroke-width="1.35" stroke-linecap="square"/><rect x="681.0" y="696.7" width="15.9" height="3.8" fill="#eef0f2"/><rect x="762.5" y="697.5" width="17.0" height="9.0" stroke="#eef0f2" stroke-width="1.35" fill="none"/><text x="767.7" y="703.5" font-size="3.2" font-weight="bold" fill="#eef0f2" textLength="6.5" lengthAdjust="spacingAndGlyphs">Yi</text><text x="765.7" y="695.4" font-size="3.5" font-weight="bold" fill="#eef0f2" textLength="9.9" lengthAdjust="spacingAndGlyphs">Ying</text><line x1="779.7" y1="702.5" x2="795.4" y2="702.5" stroke="#eef0f2" stroke-width="1.35" stroke-linecap="square"/><rect x="628.5" y="726.5" width="35.0" height="17.0" stroke="#eef0f2" stroke-width="1.35" fill="none"/><line x1="628.5" y1="744.5" x2="662.8" y2="744.5" stroke="#eef0f2" stroke-width="1.0" stroke-linecap="square"/><polyline points="628.0,726.5 638.3,735.0 628.0,743.4" fill="none" stroke="#eef0f2" stroke-width="1.35"/><text x="641.4" y="738.2" font-size="8.6" text-anchor="start" fill="#eef0f2" font-weight="normal" letter-spacing="0.3">22</text><text x="616.2" y="738.3" font-size="9.2" text-anchor="start" fill="#eef0f2" font-weight="normal" >2</text><text x="639.0" y="723.8" font-size="3.8" font-weight="bold" fill="#eef0f2" textLength="14.0" lengthAdjust="spacingAndGlyphs">Yingli</text><text x="620.7" y="749.3" font-size="4.1" font-weight="bold" fill="#eef0f2" textLength="49.8" lengthAdjust="spacingAndGlyphs">Yingli YL 230-29b/100</text><line x1="663.3" y1="735.5" x2="762.2" y2="735.5" stroke="#eef0f2" stroke-width="1.35" stroke-linecap="square"/><rect x="681.0" y="729.6" width="15.9" height="3.8" fill="#eef0f2"/><rect x="762.5" y="730.5" width="17.0" height="9.0" stroke="#eef0f2" stroke-width="1.35" fill="none"/><text x="767.7" y="736.4" font-size="3.2" font-weight="bold" fill="#eef0f2" textLength="6.5" lengthAdjust="spacingAndGlyphs">Yi</text><text x="765.7" y="728.3" font-size="3.5" font-weight="bold" fill="#eef0f2" textLength="9.9" lengthAdjust="spacingAndGlyphs">Ying</text><line x1="779.7" y1="735.5" x2="795.4" y2="735.5" stroke="#eef0f2" stroke-width="1.35" stroke-linecap="square"/><line x1="795.5" y1="702.1" x2="795.5" y2="735.0" stroke="#eef0f2" stroke-width="1.35" stroke-linecap="square"/><line x1="795.4" y1="702.5" x2="811.8" y2="702.5" stroke="#eef0f2" stroke-width="1.35" stroke-linecap="square"/><rect x="811.5" y="693.5" width="17.0" height="17.0" stroke="#eef0f2" stroke-width="1.35" fill="none"/><line x1="811.8" y1="710.4" x2="828.8" y2="693.8" stroke="#eef0f2" stroke-width="1.1" stroke-linecap="square"/><rect x="814.8" y="696.8" width="2.6" height="2.3" fill="#eef0f2"/><rect x="823.1" y="705.8" width="2.6" height="1.7" fill="#eef0f2"/><text x="817.6" y="691.1" font-size="3.8" font-weight="bold" fill="#eef0f2" textLength="5.8" lengthAdjust="spacingAndGlyphs">Yi</text><text x="801.3" y="716.0" font-size="3.8" font-weight="bold" fill="#eef0f2" textLength="39.1" lengthAdjust="spacingAndGlyphs">Yingli YL 230-29b</text><text x="807.0" y="720.6" font-size="3.8" font-weight="bold" fill="#eef0f2" textLength="26.3" lengthAdjust="spacingAndGlyphs">Yingli YL 2</text><rect x="745.5" y="685.5" width="100.0" height="62.0" stroke="#8e939b" stroke-width="1.0" fill="none"/><circle cx="712.6" cy="711.7" r="2.2" fill="none" stroke="#eef0f2" stroke-width="1"/><circle cx="712.6" cy="718.4" r="2.2" fill="none" stroke="#eef0f2" stroke-width="1"/><circle cx="712.6" cy="725.4" r="2.2" fill="none" stroke="#eef0f2" stroke-width="1"/><text x="717.0" y="722.0" font-size="9.5" text-anchor="start" fill="#eef0f2" font-weight="normal" >5</text><line x1="828.8" y1="702.5" x2="927.8" y2="702.5" stroke="#eef0f2" stroke-width="1.35" stroke-linecap="square"/><rect x="847.1" y="696.7" width="19.9" height="3.8" fill="#eef0f2"/><rect x="847.1" y="702.7" width="10.8" height="3.8" fill="#eef0f2"/><rect x="927.5" y="697.5" width="18.0" height="9.0" stroke="#eef0f2" stroke-width="1.35" fill="none"/><path d="M927.8 702.1 H932.6 L935.8 700.1 M936.3 701.1 L938.4 703.3 M937.8 702.1 H945.0" fill="none" stroke="#eef0f2" stroke-width="1"/><line x1="945.0" y1="387.5" x2="986.1" y2="387.5" stroke="#eef0f2" stroke-width="1.35" stroke-linecap="square"/><line x1="945.0" y1="469.5" x2="986.1" y2="469.5" stroke="#eef0f2" stroke-width="1.35" stroke-linecap="square"/><line x1="945.0" y1="553.5" x2="986.1" y2="553.5" stroke="#eef0f2" stroke-width="1.35" stroke-linecap="square"/><line x1="945.0" y1="702.5" x2="986.1" y2="702.5" stroke="#eef0f2" stroke-width="1.35" stroke-linecap="square"/><line x1="986.5" y1="387.3" x2="986.5" y2="702.1" stroke="#eef0f2" stroke-width="1.35" stroke-linecap="square"/><line x1="986.1" y1="387.5" x2="1027.0" y2="387.5" stroke="#eef0f2" stroke-width="1.35" stroke-linecap="square"/><rect x="1027.5" y="369.5" width="33.0" height="34.0" stroke="#eef0f2" stroke-width="1.35" fill="none"/><circle cx="1043.9" cy="382.3" r="7.2" fill="none" stroke="#eef0f2" stroke-width="1.1"/><circle cx="1043.9" cy="391.3" r="7.2" fill="none" stroke="#eef0f2" stroke-width="1.1"/><text x="1041.0" y="367.6" font-size="3.8" font-weight="bold" fill="#eef0f2" textLength="6.0" lengthAdjust="spacingAndGlyphs">Yi</text><text x="1018.0" y="409.2" font-size="3.8" font-weight="bold" fill="#eef0f2" textLength="52.0" lengthAdjust="spacingAndGlyphs">Yingli YL 230-29b/1000</text><text x="1022.0" y="414.2" font-size="3.8" font-weight="bold" fill="#eef0f2" textLength="44.0" lengthAdjust="spacingAndGlyphs">Yingli YL 230-29b/1</text><line x1="1060.8" y1="387.5" x2="1143.7" y2="387.5" stroke="#eef0f2" stroke-width="1.35" stroke-linecap="square"/><rect x="1079.0" y="381.9" width="20.0" height="3.8" fill="#eef0f2"/><rect x="1079.0" y="387.9" width="4.0" height="3.8" fill="#eef0f2"/><line x1="1102.5" y1="387.3" x2="1102.5" y2="868.0" stroke="#eef0f2" stroke-width="1.35" stroke-linecap="square"/><rect x="1143.5" y="369.5" width="34.0" height="34.0" stroke="#eef0f2" stroke-width="1.35" fill="none"/><circle cx="1160.6" cy="382.3" r="7.2" fill="none" stroke="#eef0f2" stroke-width="1.1"/><circle cx="1160.6" cy="391.3" r="7.2" fill="none" stroke="#eef0f2" stroke-width="1.1"/><text x="1157.0" y="367.6" font-size="3.8" font-weight="bold" fill="#eef0f2" textLength="7.0" lengthAdjust="spacingAndGlyphs">Yin</text><text x="1134.0" y="409.2" font-size="3.8" font-weight="bold" fill="#eef0f2" textLength="53.0" lengthAdjust="spacingAndGlyphs">Yingli YL 230-29b/1000V</text><text x="1138.0" y="414.2" font-size="3.8" font-weight="bold" fill="#eef0f2" textLength="44.0" lengthAdjust="spacingAndGlyphs">Yingli YL 230-29b/1</text><line x1="1177.4" y1="387.5" x2="1218.4" y2="387.5" stroke="#eef0f2" stroke-width="1.35" stroke-linecap="square"/><rect x="1195.3" y="381.9" width="19.7" height="3.8" fill="#eef0f2"/><rect x="1195.3" y="387.9" width="12.7" height="3.8" fill="#eef0f2"/><rect x="744.5" y="776.5" width="35.0" height="17.0" stroke="#eef0f2" stroke-width="1.35" fill="none"/><line x1="745.0" y1="794.5" x2="779.3" y2="794.5" stroke="#eef0f2" stroke-width="1.0" stroke-linecap="square"/><polyline points="744.5,776.3 754.8,784.8 744.5,793.2" fill="none" stroke="#eef0f2" stroke-width="1.35"/><text x="757.9" y="788.0" font-size="8.6" text-anchor="start" fill="#eef0f2" font-weight="normal" letter-spacing="0.3">22</text><text x="732.7" y="788.1" font-size="9.2" text-anchor="start" fill="#eef0f2" font-weight="normal" >2</text><text x="755.5" y="773.6" font-size="3.8" font-weight="bold" fill="#eef0f2" textLength="14.0" lengthAdjust="spacingAndGlyphs">Yingli</text><text x="737.2" y="799.1" font-size="4.1" font-weight="bold" fill="#eef0f2" textLength="49.8" lengthAdjust="spacingAndGlyphs">Yingli YL 230-29b/100</text><line x1="779.8" y1="784.5" x2="878.7" y2="784.5" stroke="#eef0f2" stroke-width="1.35" stroke-linecap="square"/><rect x="797.5" y="779.4" width="15.9" height="3.8" fill="#eef0f2"/><rect x="878.5" y="780.5" width="18.0" height="9.0" stroke="#eef0f2" stroke-width="1.35" fill="none"/><text x="884.2" y="786.2" font-size="3.2" font-weight="bold" fill="#eef0f2" textLength="6.5" lengthAdjust="spacingAndGlyphs">Yi</text><text x="882.2" y="778.1" font-size="3.5" font-weight="bold" fill="#eef0f2" textLength="9.9" lengthAdjust="spacingAndGlyphs">Ying</text><line x1="896.2" y1="784.5" x2="911.9" y2="784.5" stroke="#eef0f2" stroke-width="1.35" stroke-linecap="square"/><rect x="744.5" y="809.5" width="35.0" height="17.0" stroke="#eef0f2" stroke-width="1.35" fill="none"/><line x1="745.0" y1="827.5" x2="779.3" y2="827.5" stroke="#eef0f2" stroke-width="1.0" stroke-linecap="square"/><polyline points="744.5,809.3 754.8,817.8 744.5,826.2" fill="none" stroke="#eef0f2" stroke-width="1.35"/><text x="757.9" y="821.0" font-size="8.6" text-anchor="start" fill="#eef0f2" font-weight="normal" letter-spacing="0.3">22</text><text x="732.7" y="821.1" font-size="9.2" text-anchor="start" fill="#eef0f2" font-weight="normal" >2</text><text x="755.5" y="806.6" font-size="3.8" font-weight="bold" fill="#eef0f2" textLength="14.0" lengthAdjust="spacingAndGlyphs">Yingli</text><text x="737.2" y="832.1" font-size="4.1" font-weight="bold" fill="#eef0f2" textLength="49.8" lengthAdjust="spacingAndGlyphs">Yingli YL 230-29b/100</text><line x1="779.8" y1="817.5" x2="878.7" y2="817.5" stroke="#eef0f2" stroke-width="1.35" stroke-linecap="square"/><rect x="797.5" y="812.4" width="15.9" height="3.8" fill="#eef0f2"/><rect x="878.5" y="813.5" width="18.0" height="9.0" stroke="#eef0f2" stroke-width="1.35" fill="none"/><text x="884.2" y="819.2" font-size="3.2" font-weight="bold" fill="#eef0f2" textLength="6.5" lengthAdjust="spacingAndGlyphs">Yi</text><text x="882.2" y="811.1" font-size="3.5" font-weight="bold" fill="#eef0f2" textLength="9.9" lengthAdjust="spacingAndGlyphs">Ying</text><line x1="896.2" y1="817.5" x2="911.9" y2="817.5" stroke="#eef0f2" stroke-width="1.35" stroke-linecap="square"/><line x1="911.5" y1="784.8" x2="911.5" y2="817.8" stroke="#eef0f2" stroke-width="1.35" stroke-linecap="square"/><line x1="911.9" y1="784.5" x2="928.3" y2="784.5" stroke="#eef0f2" stroke-width="1.35" stroke-linecap="square"/><rect x="928.5" y="776.5" width="17.0" height="17.0" stroke="#eef0f2" stroke-width="1.35" fill="none"/><line x1="928.3" y1="793.1" x2="945.3" y2="776.5" stroke="#eef0f2" stroke-width="1.1" stroke-linecap="square"/><rect x="931.3" y="779.5" width="2.6" height="2.3" fill="#eef0f2"/><rect x="939.6" y="788.5" width="2.6" height="1.7" fill="#eef0f2"/><text x="934.1" y="773.8" font-size="3.8" font-weight="bold" fill="#eef0f2" textLength="5.8" lengthAdjust="spacingAndGlyphs">Yi</text><text x="917.8" y="798.7" font-size="3.8" font-weight="bold" fill="#eef0f2" textLength="39.1" lengthAdjust="spacingAndGlyphs">Yingli YL 230-29b</text><text x="923.5" y="803.3" font-size="3.8" font-weight="bold" fill="#eef0f2" textLength="26.3" lengthAdjust="spacingAndGlyphs">Yingli YL 2</text><rect x="862.5" y="768.5" width="100.0" height="62.0" stroke="#8e939b" stroke-width="1.0" fill="none"/><circle cx="829.1" cy="794.4" r="2.2" fill="none" stroke="#eef0f2" stroke-width="1"/><circle cx="829.1" cy="801.4" r="2.2" fill="none" stroke="#eef0f2" stroke-width="1"/><circle cx="829.1" cy="808.1" r="2.2" fill="none" stroke="#eef0f2" stroke-width="1"/><text x="833.5" y="805.0" font-size="9.5" text-anchor="start" fill="#eef0f2" font-weight="normal" >7</text><line x1="945.3" y1="784.5" x2="1044.3" y2="784.5" stroke="#eef0f2" stroke-width="1.35" stroke-linecap="square"/><rect x="963.6" y="779.4" width="19.9" height="3.8" fill="#eef0f2"/><rect x="963.6" y="785.4" width="10.8" height="3.8" fill="#eef0f2"/><rect x="1044.5" y="780.5" width="17.0" height="8.0" stroke="#eef0f2" stroke-width="1.35" fill="none"/><path d="M1044.3 784.8 H1049.1 L1052.3 782.8 M1052.8 783.8 L1054.9 786.0 M1054.3 784.8 H1061.5" fill="none" stroke="#eef0f2" stroke-width="1"/><circle cx="878.4" cy="836.4" r="2.2" fill="none" stroke="#eef0f2" stroke-width="1"/><circle cx="878.4" cy="843.2" r="2.2" fill="none" stroke="#eef0f2" stroke-width="1"/><circle cx="878.4" cy="849.9" r="2.2" fill="none" stroke="#eef0f2" stroke-width="1"/><text x="882.8" y="846.8" font-size="9.5" text-anchor="start" fill="#eef0f2" font-weight="normal" >18</text><rect x="744.5" y="859.5" width="35.0" height="17.0" stroke="#eef0f2" stroke-width="1.35" fill="none"/><line x1="745.0" y1="877.5" x2="779.3" y2="877.5" stroke="#eef0f2" stroke-width="1.0" stroke-linecap="square"/><polyline points="744.5,859.5 754.8,868.0 744.5,876.4" fill="none" stroke="#eef0f2" stroke-width="1.35"/><text x="757.9" y="871.2" font-size="8.6" text-anchor="start" fill="#eef0f2" font-weight="normal" letter-spacing="0.3">22</text><text x="732.7" y="871.3" font-size="9.2" text-anchor="start" fill="#eef0f2" font-weight="normal" >2</text><text x="755.5" y="856.8" font-size="3.8" font-weight="bold" fill="#eef0f2" textLength="14.0" lengthAdjust="spacingAndGlyphs">Yingli</text><text x="737.2" y="882.3" font-size="4.1" font-weight="bold" fill="#eef0f2" textLength="49.8" lengthAdjust="spacingAndGlyphs">Yingli YL 230-29b/100</text><line x1="779.8" y1="868.5" x2="878.7" y2="868.5" stroke="#eef0f2" stroke-width="1.35" stroke-linecap="square"/><rect x="797.5" y="862.6" width="15.9" height="3.8" fill="#eef0f2"/><rect x="878.5" y="863.5" width="18.0" height="9.0" stroke="#eef0f2" stroke-width="1.35" fill="none"/><text x="884.2" y="869.4" font-size="3.2" font-weight="bold" fill="#eef0f2" textLength="6.5" lengthAdjust="spacingAndGlyphs">Yi</text><text x="882.2" y="861.3" font-size="3.5" font-weight="bold" fill="#eef0f2" textLength="9.9" lengthAdjust="spacingAndGlyphs">Ying</text><line x1="896.2" y1="868.5" x2="911.9" y2="868.5" stroke="#eef0f2" stroke-width="1.35" stroke-linecap="square"/><rect x="744.5" y="892.5" width="35.0" height="17.0" stroke="#eef0f2" stroke-width="1.35" fill="none"/><line x1="745.0" y1="910.5" x2="779.3" y2="910.5" stroke="#eef0f2" stroke-width="1.0" stroke-linecap="square"/><polyline points="744.5,892.5 754.8,901.0 744.5,909.4" fill="none" stroke="#eef0f2" stroke-width="1.35"/><text x="757.9" y="904.2" font-size="8.6" text-anchor="start" fill="#eef0f2" font-weight="normal" letter-spacing="0.3">22</text><text x="732.7" y="904.3" font-size="9.2" text-anchor="start" fill="#eef0f2" font-weight="normal" >2</text><text x="755.5" y="889.8" font-size="3.8" font-weight="bold" fill="#eef0f2" textLength="14.0" lengthAdjust="spacingAndGlyphs">Yingli</text><text x="737.2" y="915.3" font-size="4.1" font-weight="bold" fill="#eef0f2" textLength="49.8" lengthAdjust="spacingAndGlyphs">Yingli YL 230-29b/100</text><line x1="779.8" y1="901.5" x2="878.7" y2="901.5" stroke="#eef0f2" stroke-width="1.35" stroke-linecap="square"/><rect x="797.5" y="895.6" width="15.9" height="3.8" fill="#eef0f2"/><rect x="878.5" y="896.5" width="18.0" height="9.0" stroke="#eef0f2" stroke-width="1.35" fill="none"/><text x="884.2" y="902.4" font-size="3.2" font-weight="bold" fill="#eef0f2" textLength="6.5" lengthAdjust="spacingAndGlyphs">Yi</text><text x="882.2" y="894.3" font-size="3.5" font-weight="bold" fill="#eef0f2" textLength="9.9" lengthAdjust="spacingAndGlyphs">Ying</text><line x1="896.2" y1="901.5" x2="911.9" y2="901.5" stroke="#eef0f2" stroke-width="1.35" stroke-linecap="square"/><line x1="911.5" y1="868.0" x2="911.5" y2="901.0" stroke="#eef0f2" stroke-width="1.35" stroke-linecap="square"/><line x1="911.9" y1="868.5" x2="928.3" y2="868.5" stroke="#eef0f2" stroke-width="1.35" stroke-linecap="square"/><rect x="928.5" y="859.5" width="17.0" height="17.0" stroke="#eef0f2" stroke-width="1.35" fill="none"/><line x1="928.3" y1="876.3" x2="945.3" y2="859.7" stroke="#eef0f2" stroke-width="1.1" stroke-linecap="square"/><rect x="931.3" y="862.7" width="2.6" height="2.3" fill="#eef0f2"/><rect x="939.6" y="871.7" width="2.6" height="1.7" fill="#eef0f2"/><text x="934.1" y="857.0" font-size="3.8" font-weight="bold" fill="#eef0f2" textLength="5.8" lengthAdjust="spacingAndGlyphs">Yi</text><text x="917.8" y="881.9" font-size="3.8" font-weight="bold" fill="#eef0f2" textLength="39.1" lengthAdjust="spacingAndGlyphs">Yingli YL 230-29b</text><text x="923.5" y="886.5" font-size="3.8" font-weight="bold" fill="#eef0f2" textLength="26.3" lengthAdjust="spacingAndGlyphs">Yingli YL 2</text><rect x="862.5" y="851.5" width="100.0" height="62.0" stroke="#8e939b" stroke-width="1.0" fill="none"/><circle cx="829.1" cy="877.6" r="2.2" fill="none" stroke="#eef0f2" stroke-width="1"/><circle cx="829.1" cy="884.4" r="2.2" fill="none" stroke="#eef0f2" stroke-width="1"/><circle cx="829.1" cy="891.2" r="2.2" fill="none" stroke="#eef0f2" stroke-width="1"/><text x="833.5" y="888.0" font-size="9.5" text-anchor="start" fill="#eef0f2" font-weight="normal" >7</text><line x1="945.3" y1="868.5" x2="1044.3" y2="868.5" stroke="#eef0f2" stroke-width="1.35" stroke-linecap="square"/><rect x="963.6" y="862.6" width="19.9" height="3.8" fill="#eef0f2"/><rect x="963.6" y="868.6" width="10.8" height="3.8" fill="#eef0f2"/><rect x="1044.5" y="863.5" width="17.0" height="9.0" stroke="#eef0f2" stroke-width="1.35" fill="none"/><path d="M1044.3 868.0 H1049.1 L1052.3 866.0 M1052.8 867.0 L1054.9 869.2 M1054.3 868.0 H1061.5" fill="none" stroke="#eef0f2" stroke-width="1"/><line x1="1061.5" y1="784.5" x2="1102.2" y2="784.5" stroke="#eef0f2" stroke-width="1.35" stroke-linecap="square"/><line x1="1061.5" y1="868.5" x2="1102.2" y2="868.5" stroke="#eef0f2" stroke-width="1.35" stroke-linecap="square"/></svg>
</body></html>
